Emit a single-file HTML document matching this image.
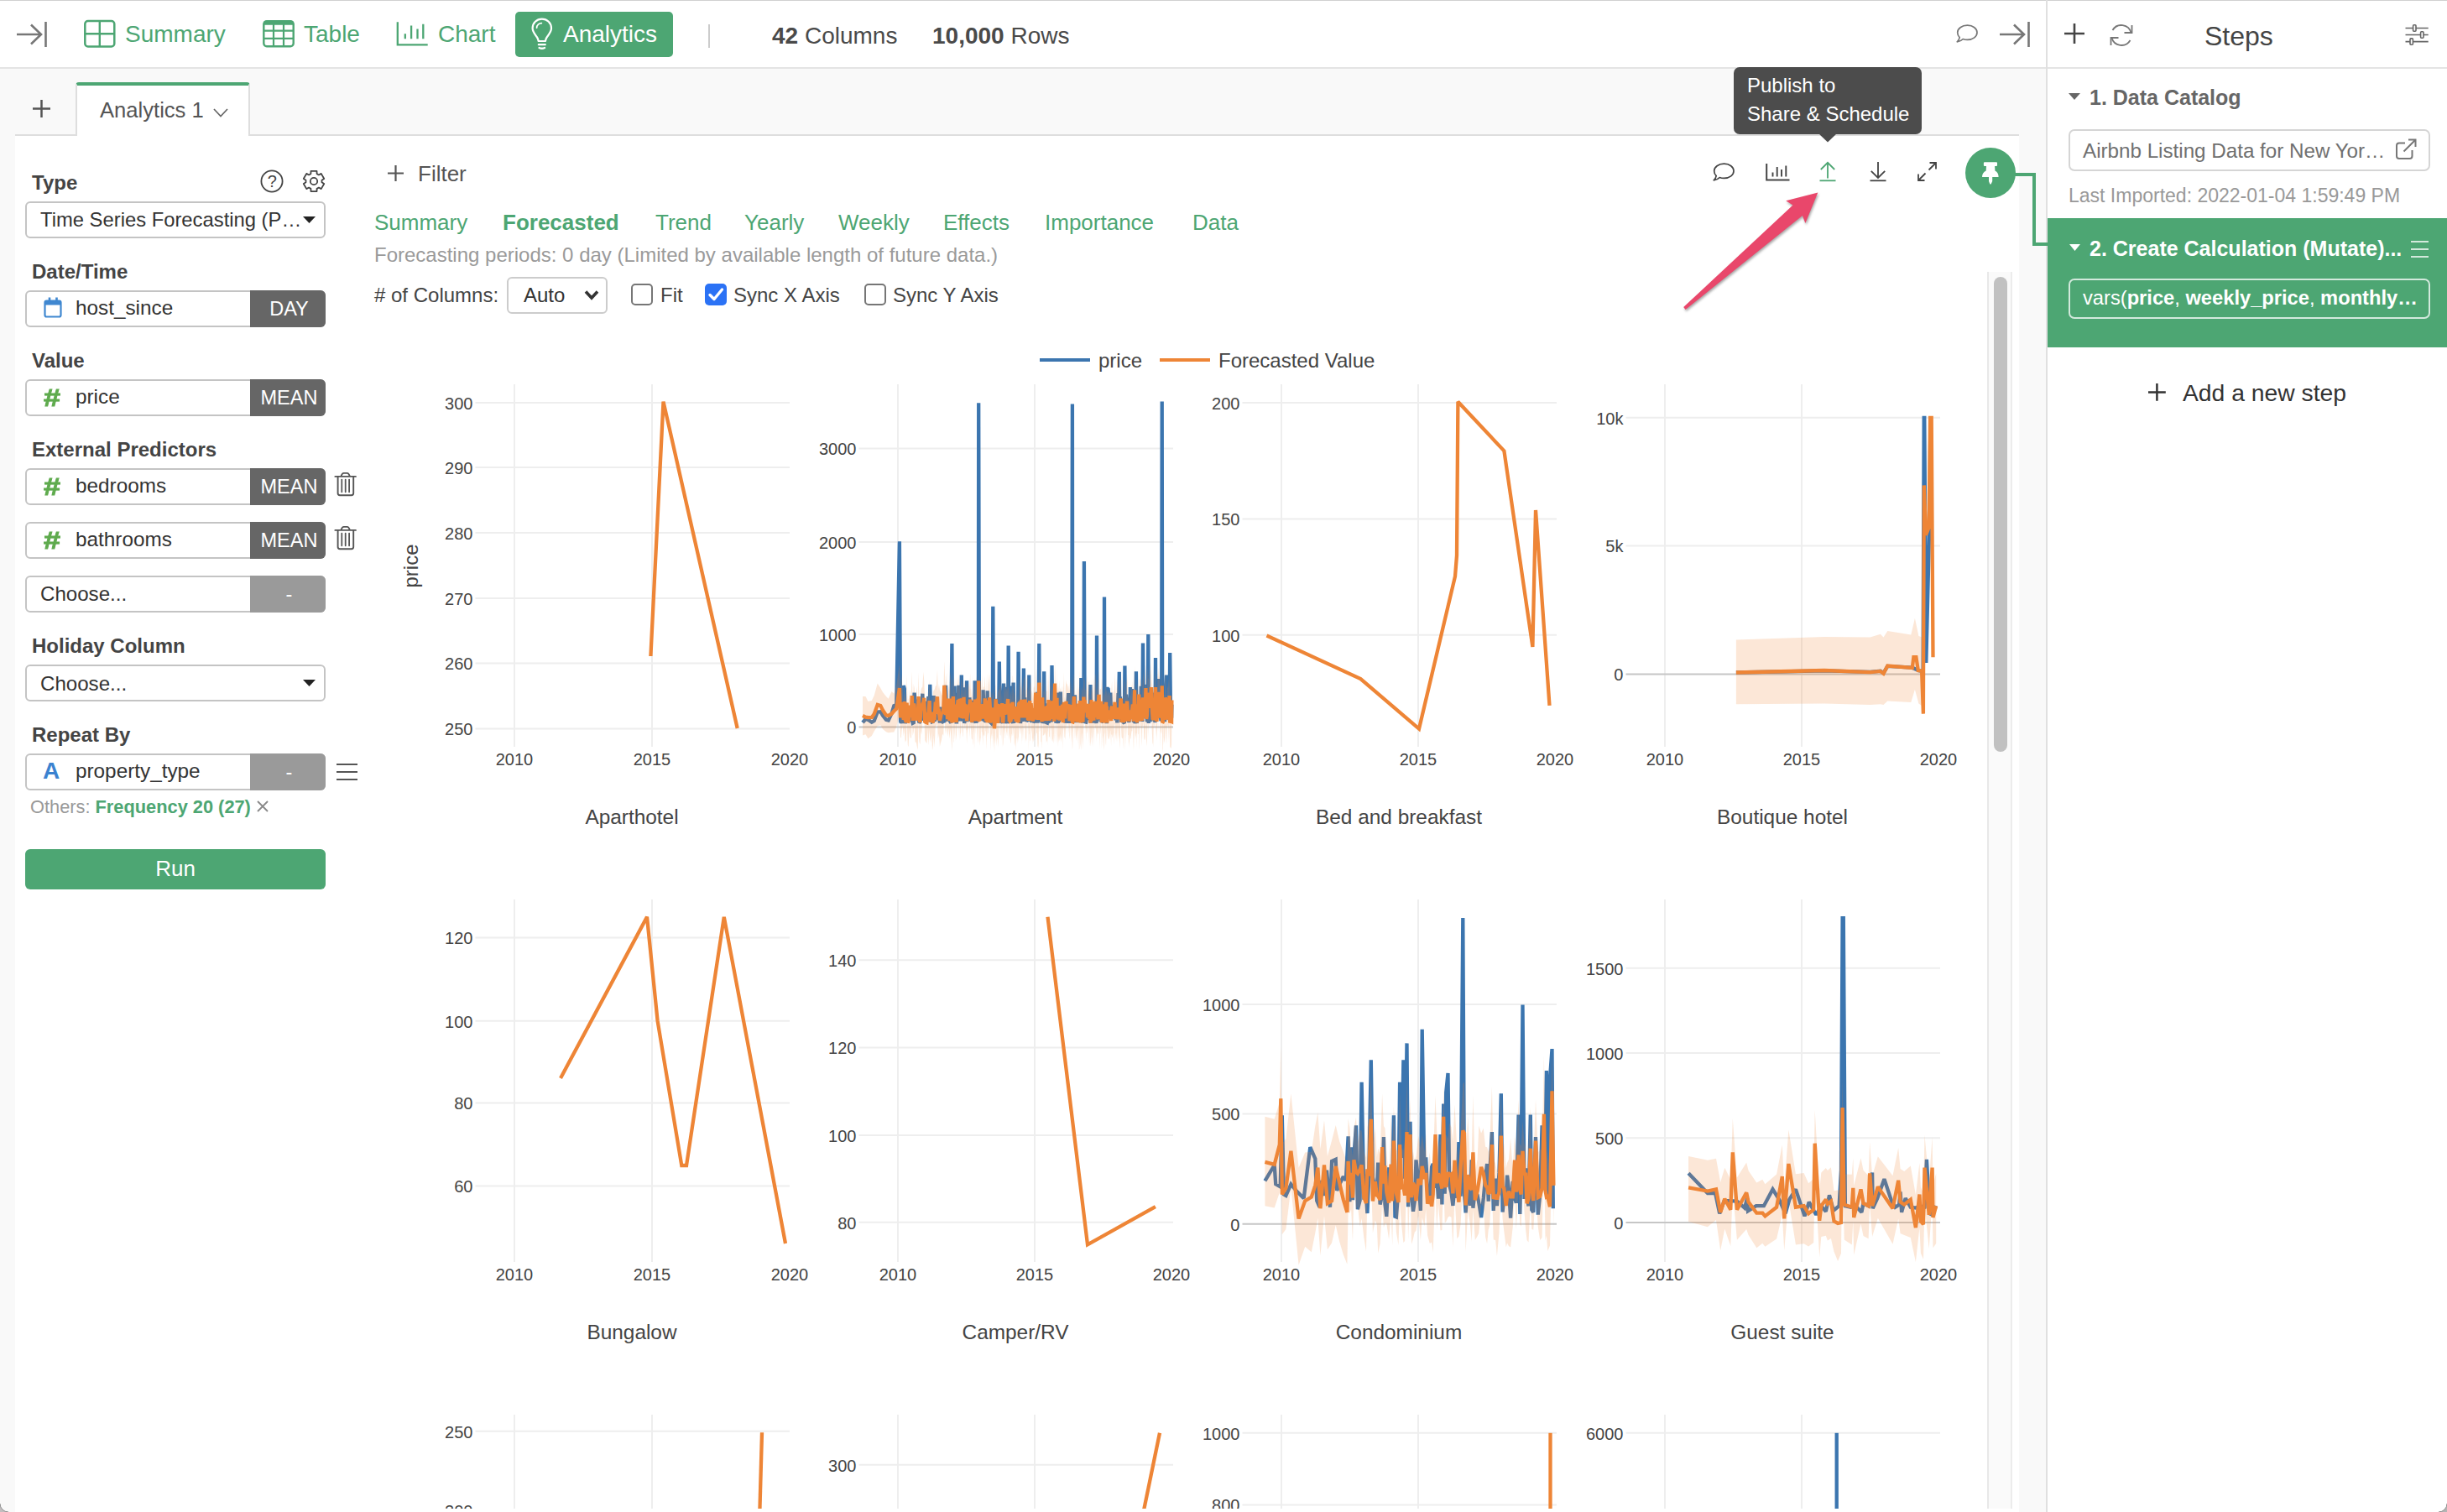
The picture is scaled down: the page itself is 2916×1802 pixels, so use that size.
<!DOCTYPE html>
<html><head><meta charset="utf-8"><title>Analytics</title>
<style>
html,body{margin:0;padding:0;background:#fff;}
body{width:2916px;height:1802px;position:relative;overflow:hidden;font-family:"Liberation Sans",sans-serif;}
.t{position:absolute;white-space:nowrap;}
.b{position:absolute;box-sizing:border-box;}
svg{overflow:visible;}
b{font-weight:700;}
</style></head><body>
<div class="b" style="left:0px;top:0px;width:2916px;height:1802px;background:#f9f9f9;"></div>
<div class="b" style="left:0px;top:0px;width:2440px;height:80px;background:#fff;border-bottom:2px solid #e4e4e4;border-top:1px solid #d0d0d0;box-sizing:content-box;height:79px;"></div>
<div class="b" style="left:18px;top:161px;width:2388px;height:1641px;background:#fff;"></div>
<div class="b" style="left:18px;top:160px;width:2388px;height:2px;background:#dedede;"></div>
<div class="b" style="left:2440px;top:0px;width:476px;height:1802px;background:#fff;"></div>
<div class="b" style="left:2438px;top:0px;width:2px;height:1802px;background:#e0e0e0;"></div>
<div class="b" style="left:2440px;top:0px;width:476px;height:1px;background:#d0d0d0;"></div>
<div class="b" style="left:2440px;top:80px;width:476px;height:2px;background:#e4e4e4;"></div>
<svg class="b" style="left:20px;top:26px" width="37" height="30" viewBox="0 0 37 30"><path d="M0 15 H28 M17 3.5 L29 15 L17 26.5 M34.5 0 V30" fill="none" stroke="#777" stroke-width="2.6"/></svg>
<svg class="b" style="left:100px;top:24px" width="38" height="33" viewBox="0 0 38 33"><rect x="1.3" y="1.1" width="35" height="30.4" rx="3.5" fill="none" stroke="#4da673" stroke-width="2.5"/><path d="M18.8 1.1 V31.5 M1.3 16.3 H36.3" stroke="#4da673" stroke-width="2.4" fill="none"/></svg>
<div class="t " style="left:149px;top:27.0px;font-size:28px;line-height:28px;color:#4da673;font-weight:400;">Summary</div>
<svg class="b" style="left:313px;top:24px" width="38" height="33" viewBox="0 0 38 33"><rect x="1.3" y="1.3" width="35.4" height="30" rx="3.5" fill="none" stroke="#4da673" stroke-width="2.4"/><path d="M1.3 3.6 H36.7" stroke="#4da673" stroke-width="4.2"/><path d="M13 3 V31 M25 3 V31 M1.3 12.6 H36.7 M1.3 21.8 H36.7" stroke="#4da673" stroke-width="2.2" fill="none"/></svg>
<div class="t " style="left:362px;top:27.0px;font-size:28px;line-height:28px;color:#4da673;font-weight:400;">Table</div>
<svg class="b" style="left:472px;top:25px" width="39" height="30" viewBox="0 0 39 30"><path d="M1.8 1.3 V28.3 H37.7" fill="none" stroke="#4da673" stroke-width="2.3"/><path d="M10.8 15.2 V21.3 M18.1 5.4 V21.3 M25.5 9.5 V21.3 M32.3 3.8 V21.3" stroke="#4da673" stroke-width="2.3" fill="none"/></svg>
<div class="t " style="left:522px;top:27.0px;font-size:28px;line-height:28px;color:#4da673;font-weight:400;">Chart</div>
<div class="b" style="left:614px;top:14px;width:188px;height:54px;background:#4da673;border-radius:5px;"></div>
<svg class="b" style="left:632px;top:21px" width="28" height="40" viewBox="0 0 28 40"><path d="M9.6 28 C9.6 22.5 2.6 19.5 2.6 12.6 C2.6 6.3 7.6 1.6 13.8 1.6 C20 1.6 25 6.3 25 12.6 C25 19.5 18 22.5 18 28 Z" fill="none" stroke="#fff" stroke-width="2.2" stroke-linejoin="round"/><path d="M9.8 32.2 H17.8" stroke="#fff" stroke-width="2.2" stroke-linecap="round"/><path d="M10.6 36 Q13.8 37.6 17 36" fill="none" stroke="#fff" stroke-width="2.4" stroke-linecap="round"/><path d="M7.6 12.2 C7.6 9 10.4 6.6 13.4 6.6" fill="none" stroke="#fff" stroke-width="1.7" stroke-linecap="round"/></svg>
<div class="t " style="left:671px;top:27.0px;font-size:28px;line-height:28px;color:#fff;font-weight:400;">Analytics</div>
<div class="b" style="left:844px;top:29px;width:2px;height:28px;background:#ccc;"></div>
<div class="t " style="left:920px;top:29.0px;font-size:28px;line-height:28px;color:#4a4a4a;font-weight:400;"><b>42</b> Columns</div>
<div class="t " style="left:1111px;top:29.0px;font-size:28px;line-height:28px;color:#4a4a4a;font-weight:400;"><b>10,000</b> Rows</div>
<svg class="b" style="left:2331px;top:29px" width="26" height="22.0" viewBox="0 0 26 22"><path d="M13.5 1.2 C20.2 1.2 25 5 25 9.8 C25 14.6 20.2 18.4 13.5 18.4 C11.6 18.4 9.8 18.1 8.2 17.5 C6.3 19.6 3.6 20.6 1.2 20.8 C3 19.3 3.9 17.4 4.2 15.7 C2.6 14.1 1.7 12 1.7 9.8 C1.7 5 6.8 1.2 13.5 1.2 Z" fill="none" stroke="#777" stroke-width="1.7" stroke-linejoin="round"/></svg>
<svg class="b" style="left:2383px;top:26px" width="37" height="30" viewBox="0 0 37 30"><path d="M0 15 H28 M17 3.5 L29 15 L17 26.5 M34.5 0 V30" fill="none" stroke="#777" stroke-width="2.6"/></svg>
<svg class="b" style="left:39px;top:119px" width="21" height="21" viewBox="0 0 21 21"><path d="M10.5 0 V21 M0 10.5 H21" stroke="#555" stroke-width="2.5" fill="none"/></svg>
<div class="b" style="left:90px;top:98px;width:208px;height:64px;background:#fff;border:2px solid #dedede;border-bottom:none;border-top:4px solid #4da673;border-radius:4px 4px 0 0;box-sizing:border-box;"></div>
<div class="t " style="left:119px;top:119.2px;font-size:25.6px;line-height:25.6px;color:#555;font-weight:400;">Analytics 1</div>
<svg class="b" style="left:254px;top:128.5px" width="18" height="11" viewBox="0 0 18 11"><path d="M1 1 L9 9.5 L17 1" fill="none" stroke="#666" stroke-width="1.7"/></svg>
<div class="t " style="left:38px;top:206.0px;font-size:24px;line-height:24px;color:#444;font-weight:700;">Type</div>
<svg class="b" style="left:310px;top:201.9px" width="28" height="28" viewBox="0 0 28 28"><circle cx="14" cy="14" r="12.6" fill="none" stroke="#444" stroke-width="1.8"/><text x="14.2" y="21.2" font-size="20" text-anchor="middle" fill="#444" font-family="Liberation Sans, sans-serif">?</text></svg>
<svg class="b" style="left:360px;top:201.9px" width="28" height="28" viewBox="0 0 28 28"><path d="M10.40 5.10 L10.48 1.90 L17.52 1.90 L17.60 5.10 L19.91 6.43 L22.72 4.91 L26.24 10.99 L23.51 12.67 L23.51 15.33 L26.24 17.01 L22.72 23.09 L19.91 21.57 L17.60 22.90 L17.52 26.10 L10.48 26.10 L10.40 22.90 L8.09 21.57 L5.28 23.09 L1.76 17.01 L4.49 15.33 L4.49 12.67 L1.76 10.99 L5.28 4.91 L8.09 6.43 Z" fill="none" stroke="#444" stroke-width="1.8" stroke-linejoin="round"/><circle cx="14" cy="14" r="4.2" fill="none" stroke="#444" stroke-width="1.8"/></svg>
<div class="b" style="left:30px;top:240px;width:358px;height:44px;background:#fff;border:2px solid #c4c4c4;border-radius:6px;box-sizing:border-box;"></div>
<div class="t " style="left:48px;top:249.6px;font-size:23.8px;line-height:23.8px;color:#333;font-weight:400;">Time Series Forecasting (P…</div>
<svg class="b" style="left:360.5px;top:258px" width="15" height="8" viewBox="0 0 15 8"><path d="M0 0 H15 L7.5 8 Z" fill="#222"/></svg>
<div class="t " style="left:38px;top:312.0px;font-size:24px;line-height:24px;color:#444;font-weight:700;">Date/Time</div>
<div class="b" style="left:30px;top:346px;width:358px;height:44px;background:#fff;border:2px solid #c4c4c4;border-radius:6px;box-sizing:border-box;"></div>
<div class="b" style="left:298px;top:346px;width:90px;height:44px;background:#666;border-radius:0 6px 6px 0;"></div>
<svg class="b" style="left:51px;top:354px" width="24" height="26" viewBox="0 0 24 26"><rect x="2.5" y="4.5" width="19" height="19" rx="2" fill="none" stroke="#3f87d0" stroke-width="2.2"/><path d="M2.5 4.5 H21.5 V9.5 H2.5 Z" fill="#3f87d0"/><path d="M8 0.5 V6 M16.5 0.5 V6" stroke="#3f87d0" stroke-width="2.6"/></svg>
<div class="t " style="left:90px;top:355.4px;font-size:24.3px;line-height:24.3px;color:#333;font-weight:400;">host_since</div>
<div class="t" style="left:300px;width:89px;text-align:center;top:356px;font-size:23.5px;line-height:24px;color:#fff;">DAY</div>
<div class="t " style="left:38px;top:418.0px;font-size:24px;line-height:24px;color:#444;font-weight:700;">Value</div>
<div class="b" style="left:30px;top:452px;width:358px;height:44px;background:#fff;border:2px solid #c4c4c4;border-radius:6px;box-sizing:border-box;"></div>
<div class="b" style="left:298px;top:452px;width:90px;height:44px;background:#666;border-radius:0 6px 6px 0;"></div>
<div class="t " style="left:52px;top:458.5px;font-size:30px;line-height:30px;color:#5fab4e;font-weight:700;transform:scaleX(1.2);transform-origin:0 50%;-webkit-text-stroke:0.9px #5fab4e;">#</div>
<div class="t " style="left:90px;top:461.4px;font-size:24.3px;line-height:24.3px;color:#333;font-weight:400;">price</div>
<div class="t" style="left:300px;width:89px;text-align:center;top:462px;font-size:23.5px;line-height:24px;color:#fff;">MEAN</div>
<div class="t " style="left:38px;top:524.0px;font-size:24px;line-height:24px;color:#444;font-weight:700;">External Predictors</div>
<div class="b" style="left:30px;top:558px;width:358px;height:44px;background:#fff;border:2px solid #c4c4c4;border-radius:6px;box-sizing:border-box;"></div>
<div class="b" style="left:298px;top:558px;width:90px;height:44px;background:#666;border-radius:0 6px 6px 0;"></div>
<div class="t " style="left:52px;top:564.5px;font-size:30px;line-height:30px;color:#5fab4e;font-weight:700;transform:scaleX(1.2);transform-origin:0 50%;-webkit-text-stroke:0.9px #5fab4e;">#</div>
<div class="t " style="left:90px;top:567.4px;font-size:24.3px;line-height:24.3px;color:#333;font-weight:400;">bedrooms</div>
<div class="t" style="left:300px;width:89px;text-align:center;top:568px;font-size:23.5px;line-height:24px;color:#fff;">MEAN</div>
<svg class="b" style="left:399px;top:562px" width="26" height="30" viewBox="0 0 26 30"><path d="M0.4 5.9 H24.9" stroke="#555" stroke-width="1.9" stroke-linecap="round"/><path d="M7.4 5.6 C8.3 3.2 9.3 1.9 10.6 1.9 H14.7 C16 1.9 17 3.2 17.9 5.6" fill="none" stroke="#555" stroke-width="1.8"/><path d="M3.6 6 V25.8 Q3.6 28.2 6 28.2 H19.8 Q22.2 28.2 22.2 25.8 V6" fill="none" stroke="#555" stroke-width="1.9"/><path d="M8.3 9.6 V24.3 M12.7 9.6 V24.3 M17.1 9.6 V24.3" stroke="#555" stroke-width="1.8" stroke-linecap="round"/></svg>
<div class="b" style="left:30px;top:622px;width:358px;height:44px;background:#fff;border:2px solid #c4c4c4;border-radius:6px;box-sizing:border-box;"></div>
<div class="b" style="left:298px;top:622px;width:90px;height:44px;background:#666;border-radius:0 6px 6px 0;"></div>
<div class="t " style="left:52px;top:628.5px;font-size:30px;line-height:30px;color:#5fab4e;font-weight:700;transform:scaleX(1.2);transform-origin:0 50%;-webkit-text-stroke:0.9px #5fab4e;">#</div>
<div class="t " style="left:90px;top:631.4px;font-size:24.3px;line-height:24.3px;color:#333;font-weight:400;">bathrooms</div>
<div class="t" style="left:300px;width:89px;text-align:center;top:632px;font-size:23.5px;line-height:24px;color:#fff;">MEAN</div>
<svg class="b" style="left:399px;top:626px" width="26" height="30" viewBox="0 0 26 30"><path d="M0.4 5.9 H24.9" stroke="#555" stroke-width="1.9" stroke-linecap="round"/><path d="M7.4 5.6 C8.3 3.2 9.3 1.9 10.6 1.9 H14.7 C16 1.9 17 3.2 17.9 5.6" fill="none" stroke="#555" stroke-width="1.8"/><path d="M3.6 6 V25.8 Q3.6 28.2 6 28.2 H19.8 Q22.2 28.2 22.2 25.8 V6" fill="none" stroke="#555" stroke-width="1.9"/><path d="M8.3 9.6 V24.3 M12.7 9.6 V24.3 M17.1 9.6 V24.3" stroke="#555" stroke-width="1.8" stroke-linecap="round"/></svg>
<div class="b" style="left:30px;top:686px;width:358px;height:44px;background:#fff;border:2px solid #c4c4c4;border-radius:6px;box-sizing:border-box;"></div>
<div class="b" style="left:298px;top:686px;width:90px;height:44px;background:#9a9a9a;border-radius:0 6px 6px 0;"></div>
<div class="t " style="left:48px;top:695.5px;font-size:24.1px;line-height:24.1px;color:#333;font-weight:400;">Choose...</div>
<div class="t" style="left:300px;width:89px;text-align:center;top:696px;font-size:23.5px;line-height:24px;color:#fff;">-</div>
<div class="t " style="left:38px;top:758.0px;font-size:24px;line-height:24px;color:#444;font-weight:700;">Holiday Column</div>
<div class="b" style="left:30px;top:792px;width:358px;height:44px;background:#fff;border:2px solid #c4c4c4;border-radius:6px;box-sizing:border-box;"></div>
<div class="t " style="left:48px;top:802.5px;font-size:24.1px;line-height:24.1px;color:#333;font-weight:400;">Choose...</div>
<svg class="b" style="left:360.5px;top:810px" width="15" height="8" viewBox="0 0 15 8"><path d="M0 0 H15 L7.5 8 Z" fill="#222"/></svg>
<div class="t " style="left:38px;top:864.0px;font-size:24px;line-height:24px;color:#444;font-weight:700;">Repeat By</div>
<div class="b" style="left:30px;top:898px;width:358px;height:44px;background:#fff;border:2px solid #c4c4c4;border-radius:6px;box-sizing:border-box;"></div>
<div class="b" style="left:298px;top:898px;width:90px;height:44px;background:#9a9a9a;border-radius:0 6px 6px 0;"></div>
<div class="t " style="left:51px;top:905.0px;font-size:28px;line-height:28px;color:#3b82d0;font-weight:700;font-family:"DejaVu Serif",serif;-webkit-text-stroke:0.6px #3b82d0;">A</div>
<div class="t " style="left:90px;top:907.4px;font-size:24.3px;line-height:24.3px;color:#333;font-weight:400;">property_type</div>
<div class="t" style="left:300px;width:89px;text-align:center;top:908px;font-size:23.5px;line-height:24px;color:#fff;">-</div>
<svg class="b" style="left:401px;top:909px" width="25" height="22" viewBox="0 0 25 22"><path d="M0 2 H25 M0 11 H25 M0 20 H25" stroke="#555" stroke-width="2"/></svg>
<div class="t " style="left:36px;top:951.1px;font-size:21.8px;line-height:21.8px;color:#999;font-weight:400;">Others: <b style="color:#4da673">Frequency 20 (27)</b></div>
<svg class="b" style="left:306px;top:954px" width="14" height="14" viewBox="0 0 14 14"><path d="M1 1 L13 13 M13 1 L1 13" stroke="#888" stroke-width="1.8"/></svg>
<div class="b" style="left:30px;top:1012px;width:358px;height:48px;background:#4da673;border-radius:6px;"></div>
<div class="t" style="left:-391px;width:1200px;text-align:center;top:1022.0px;font-size:26px;line-height:26px;color:#fff;font-weight:400;">Run</div>
<svg class="b" style="left:462px;top:197px" width="19" height="19" viewBox="0 0 19 19"><path d="M9.5 0 V19 M0 9.5 H19" stroke="#555" stroke-width="2.2" fill="none"/></svg>
<div class="t " style="left:498px;top:194.0px;font-size:26px;line-height:26px;color:#555;font-weight:400;">Filter</div>
<div class="t " style="left:446px;top:252.0px;font-size:26px;line-height:26px;color:#4da673;font-weight:400;">Summary</div>
<div class="t " style="left:599px;top:252.0px;font-size:26px;line-height:26px;color:#4da673;font-weight:700;">Forecasted</div>
<div class="t " style="left:781px;top:252.0px;font-size:26px;line-height:26px;color:#4da673;font-weight:400;">Trend</div>
<div class="t " style="left:887px;top:252.0px;font-size:26px;line-height:26px;color:#4da673;font-weight:400;">Yearly</div>
<div class="t " style="left:999px;top:252.0px;font-size:26px;line-height:26px;color:#4da673;font-weight:400;">Weekly</div>
<div class="t " style="left:1124px;top:252.0px;font-size:26px;line-height:26px;color:#4da673;font-weight:400;">Effects</div>
<div class="t " style="left:1245px;top:252.0px;font-size:26px;line-height:26px;color:#4da673;font-weight:400;">Importance</div>
<div class="t " style="left:1421px;top:252.0px;font-size:26px;line-height:26px;color:#4da673;font-weight:400;">Data</div>
<div class="t " style="left:446px;top:292.0px;font-size:24px;line-height:24px;color:#9a9a9a;font-weight:400;">Forecasting periods: 0 day (Limited by available length of future data.)</div>
<div class="t " style="left:446px;top:340.0px;font-size:24px;line-height:24px;color:#444;font-weight:400;"># of Columns:</div>
<div class="b" style="left:604px;top:330px;width:120px;height:44px;background:#fff;border:2px solid #ccc;border-radius:6px;box-sizing:border-box;"></div>
<div class="t " style="left:624px;top:340.0px;font-size:24px;line-height:24px;color:#333;font-weight:400;">Auto</div>
<svg class="b" style="left:696px;top:345px" width="18" height="13" viewBox="0 0 18 13"><path d="M2 2.5 L9 10 L16 2.5" fill="none" stroke="#333" stroke-width="3.6"/></svg>
<div class="b" style="left:752px;top:338px;width:26px;height:26px;background:#fff;border:2px solid #767676;border-radius:5px;box-sizing:border-box;"></div>
<div class="t " style="left:787px;top:340.0px;font-size:24px;line-height:24px;color:#444;font-weight:400;">Fit</div>
<div class="b" style="left:840px;top:338px;width:26px;height:26px;background:#2b72f5;border-radius:5px;"></div>
<svg class="b" style="left:840px;top:338px" width="26" height="26" viewBox="0 0 26 26"><path d="M6 13.5 L11 18.5 L20.5 7" fill="none" stroke="#fff" stroke-width="3.4" stroke-linecap="round" stroke-linejoin="round"/></svg>
<div class="t " style="left:874px;top:340.0px;font-size:24px;line-height:24px;color:#444;font-weight:400;">Sync X Axis</div>
<div class="b" style="left:1030px;top:338px;width:26px;height:26px;background:#fff;border:2px solid #767676;border-radius:5px;box-sizing:border-box;"></div>
<div class="t " style="left:1064px;top:340.0px;font-size:24px;line-height:24px;color:#444;font-weight:400;">Sync Y Axis</div>
<svg class="b" style="left:2041px;top:193.5px" width="26" height="22.0" viewBox="0 0 26 22"><path d="M13.5 1.2 C20.2 1.2 25 5 25 9.8 C25 14.6 20.2 18.4 13.5 18.4 C11.6 18.4 9.8 18.1 8.2 17.5 C6.3 19.6 3.6 20.6 1.2 20.8 C3 19.3 3.9 17.4 4.2 15.7 C2.6 14.1 1.7 12 1.7 9.8 C1.7 5 6.8 1.2 13.5 1.2 Z" fill="none" stroke="#444" stroke-width="1.7" stroke-linejoin="round"/></svg>
<svg class="b" style="left:2104px;top:191px" width="29" height="26" viewBox="0 0 29 26"><path d="M1.2 4 V23.5 H28.5" fill="none" stroke="#444" stroke-width="2"/><path d="M8.5 14.5 V19.5 M13.7 8 V19.5 M19 11 V19.5 M24.3 6.5 V19.5" stroke="#444" stroke-width="1.9" fill="none"/></svg>
<svg class="b" style="left:2166px;top:190px" width="24" height="28" viewBox="0 0 24 28"><path d="M12 4 V22.5 M3.8 12 L12 3.8 L20.2 12" fill="none" stroke="#4da673" stroke-width="1.8"/><path d="M2.5 25.3 H21.5" stroke="#4da673" stroke-width="1.8"/></svg>
<svg class="b" style="left:2226px;top:190px" width="24" height="28" viewBox="0 0 24 28"><path d="M12 3 V21.8 M3.8 13.8 L12 22 L20.2 13.8" fill="none" stroke="#444" stroke-width="1.8"/><path d="M2.5 25.3 H21.5" stroke="#444" stroke-width="1.8"/></svg>
<svg class="b" style="left:2284px;top:192px" width="25" height="25" viewBox="0 0 25 25"><path d="M2 23 L10.5 14.5 M14.5 10.5 L23 2 M15.5 2 H23 V9.5 M2 15.5 V23 H9.5" fill="none" stroke="#444" stroke-width="1.8"/></svg>
<div class="b" style="left:2342px;top:176px;width:60px;height:60px;background:#4da673;border-radius:50%;"></div>
<svg class="b" style="left:2358px;top:190px" width="28" height="32" viewBox="0 0 28 32"><path d="M7 3.3 H21 Q22 3.3 22 4.3 V7.1 Q22 8.1 21 8.1 H19.1 L19.4 13.6 C22.3 15 23.6 17.8 23.6 21 H16.2 V26 L14.6 29.4 H13.4 L12 26 V21 H4 C4 17.8 5.7 15 8.7 13.6 L9 8.1 H7 Q5.9 8.1 5.9 7.1 V4.3 Q5.9 3.3 7 3.3 Z" fill="#fff"/></svg>
<svg class="b" style="left:2398px;top:200px" width="46" height="100"><path d="M3 8 H26 V91 H44" fill="none" stroke="#4da673" stroke-width="4"/></svg>
<div class="b" style="left:2066px;top:80px;width:224px;height:80px;background:#4c4c4c;border-radius:7px;"></div>
<svg class="b" style="left:2167px;top:159px" width="22" height="12"><path d="M0 0 H22 L11 10.6 Z" fill="#4c4c4c"/></svg>
<div class="t " style="left:2082px;top:90.0px;font-size:24px;line-height:24px;color:#fff;font-weight:400;">Publish to</div>
<div class="t " style="left:2082px;top:124.0px;font-size:24px;line-height:24px;color:#fff;font-weight:400;">Share &amp; Schedule</div>
<svg class="b" style="left:2000px;top:225px;filter:drop-shadow(1.5px 2px 1.5px rgba(0,0,0,.35))" width="175" height="150"><path d="M166.3 4.6 L128.2 14.2 L136.5 19.5 L6.2 141.0 L8.6 143.9 L147.9 32.0 L151.4 41.0 Z" fill="#e9476b"/></svg>
<div class="b" style="left:2368px;top:324px;width:30px;height:1474px;background:#fafafa;border-left:2px solid #e8e8e8;border-right:2px solid #ececec;box-sizing:border-box;"></div>
<div class="b" style="left:2376px;top:330px;width:16px;height:566px;background:#c1c1c1;border-radius:8px;"></div>
<svg class="b" style="left:440px;top:380px;overflow:hidden" width="1926" height="1418" viewBox="0 0 1926 1418" font-family="Liberation Sans, sans-serif">
<line x1="799" y1="49" x2="859" y2="49" stroke="#3b75af" stroke-width="4"/>
<text x="869" y="58" font-size="24" fill="#444">price</text>
<line x1="942" y1="49" x2="1002" y2="49" stroke="#ee8536" stroke-width="4"/>
<text x="1012" y="58" font-size="24" fill="#444">Forecasted Value</text>
<text transform="translate(57.5,294.5) rotate(-90)" text-anchor="middle" font-size="24" fill="#444">price</text>
<line x1="173" y1="78" x2="173" y2="510" stroke="#eeeeee" stroke-width="2"/>
<text x="173" y="532" text-anchor="middle" font-size="20" fill="#444">2010</text>
<line x1="337" y1="78" x2="337" y2="510" stroke="#eeeeee" stroke-width="2"/>
<text x="337" y="532" text-anchor="middle" font-size="20" fill="#444">2015</text>
<text x="501" y="532" text-anchor="middle" font-size="20" fill="#444">2020</text>
<line x1="126.5" y1="100" x2="501" y2="100" stroke="#eeeeee" stroke-width="2"/>
<text x="123.4" y="107.8" text-anchor="end" font-size="20" fill="#444">300</text>
<line x1="126.5" y1="177" x2="501" y2="177" stroke="#eeeeee" stroke-width="2"/>
<text x="123.4" y="184.8" text-anchor="end" font-size="20" fill="#444">290</text>
<line x1="126.5" y1="255" x2="501" y2="255" stroke="#eeeeee" stroke-width="2"/>
<text x="123.4" y="262.8" text-anchor="end" font-size="20" fill="#444">280</text>
<line x1="126.5" y1="333" x2="501" y2="333" stroke="#eeeeee" stroke-width="2"/>
<text x="123.4" y="340.8" text-anchor="end" font-size="20" fill="#444">270</text>
<line x1="126.5" y1="410.6" x2="501" y2="410.6" stroke="#eeeeee" stroke-width="2"/>
<text x="123.4" y="418.4" text-anchor="end" font-size="20" fill="#444">260</text>
<line x1="126.5" y1="488.5" x2="501" y2="488.5" stroke="#eeeeee" stroke-width="2"/>
<text x="123.4" y="496.3" text-anchor="end" font-size="20" fill="#444">250</text>
<text x="313" y="602" text-anchor="middle" font-size="24.4" fill="#444">Aparthotel</text>
<polyline points="335.4,402 350.5,98.7 438.7,488" fill="none" stroke="#ee8536" stroke-width="4.3" stroke-linejoin="miter" stroke-miterlimit="2"/>
<line x1="630" y1="78" x2="630" y2="510" stroke="#eeeeee" stroke-width="2"/>
<text x="630" y="532" text-anchor="middle" font-size="20" fill="#444">2010</text>
<line x1="793" y1="78" x2="793" y2="510" stroke="#eeeeee" stroke-width="2"/>
<text x="793" y="532" text-anchor="middle" font-size="20" fill="#444">2015</text>
<text x="956" y="532" text-anchor="middle" font-size="20" fill="#444">2020</text>
<line x1="583.5" y1="154.5" x2="958" y2="154.5" stroke="#eeeeee" stroke-width="2"/>
<text x="580.4" y="162.3" text-anchor="end" font-size="20" fill="#444">3000</text>
<line x1="583.5" y1="266" x2="958" y2="266" stroke="#eeeeee" stroke-width="2"/>
<text x="580.4" y="273.8" text-anchor="end" font-size="20" fill="#444">2000</text>
<line x1="583.5" y1="376" x2="958" y2="376" stroke="#eeeeee" stroke-width="2"/>
<text x="580.4" y="383.8" text-anchor="end" font-size="20" fill="#444">1000</text>
<line x1="583.5" y1="486.6" x2="958" y2="486.6" stroke="#c6c6c6" stroke-width="2"/>
<text x="580.4" y="494.4" text-anchor="end" font-size="20" fill="#444">0</text>
<text x="770" y="602" text-anchor="middle" font-size="24.4" fill="#444">Apartment</text>
<polyline points="588,481.1 591.5,477 594.5,477.8 598.8,480.8 601.7,479 605.7,468.6 609.3,468.2 612,472.8 616,477.9 618.7,478.5 622.5,470.5 625.3,461.1 628.2,460.1 631.9,265.2 633.1,479.5 633.8,481.4 634.5,478.8 635.6,481.9 636.8,437.1 637.8,440.7 638.7,482.2 640,475.5 640.6,471.5 641.8,473.5 642.6,469.1 643.3,467.4 644,479.6 644.8,465.1 646,476.5 646.7,477.8 647.7,481.8 648.8,481.2 649.6,445.6 650.6,455.8 651.3,463.3 651.9,471 652.6,453.7 653.7,476.5 654.6,478 655.4,481.2 656.4,480.1 657.4,467.8 658.2,464.9 659.3,446.7 660.4,478.8 661.2,474.7 662.2,471.5 663.2,455.9 664.4,479.7 665.5,476.8 666.3,450.1 667.6,469.4 668.3,435.7 669.2,480.8 670.3,463.7 671,480.1 672,479.7 672.6,449 673.6,479.3 674.8,476.9 675.8,472.9 677,474 677.8,475 678.9,474 679.9,481.5 680.9,462.6 681.9,479.3 683.1,480.4 684.3,479.6 685.3,480.8 686.3,455.9 687,436.8 688.1,473.7 689.1,479.3 690.4,469.9 691.6,478 692.4,480.3 693.3,481.5 694.4,387 695,480.9 695.9,470.2 696.3,474.6 696.7,479.2 697,478.6 697.6,437.5 698,477.6 698.4,468.5 698.9,445.9 699.6,480.4 700,480.4 700.5,446.2 701,479.5 701.7,470.5 702.3,436.8 703,474.7 703.4,468 703.9,479.5 704.4,442.5 705.1,468.2 705.8,424.6 706.2,479.5 706.6,473.4 707,475.2 707.4,470.3 707.9,459.5 708.5,439.2 708.9,478 709.2,481.8 709.7,478.7 710.2,475.8 710.8,479.8 711.5,467.7 712.1,431.2 712.6,480.1 713.2,474.7 713.8,468.8 714.1,476.6 714.8,479.2 715.4,451.4 716.1,477.1 716.7,464.6 717.2,479.8 717.7,470.8 718.1,454.7 718.7,481.3 719,477.7 719.4,455.2 719.8,471 720.2,469.6 720.6,460.8 721,469.1 721.3,473.9 721.7,431.2 722.1,475.5 722.5,478.5 722.9,478.2 723.5,481.6 724.1,474.1 724.5,479.4 724.9,478.7 725.4,478 725.9,461.9 726.2,100.3 726.9,455.9 727.6,474.7 728.1,468.4 728.6,475.6 729,476.4 729.4,472.2 729.8,463.4 730.3,470.9 730.9,471.5 731.3,479.1 731.6,442.3 732.4,463.6 732.9,479.6 733.3,451.9 733.8,479.1 734.2,479.4 734.7,480.3 735.4,477.8 736.1,474.4 736.7,443.4 737.1,476.8 737.6,467.9 738,460.1 738.6,472.8 739.1,481.5 739.8,469.9 740.2,480.4 740.6,481.2 741.3,481.9 742,479.3 742.7,480.2 743.3,342.7 744,480.7 744.6,474.8 745,477.3 745.5,476.1 746,481.2 746.3,470.7 746.7,481.5 747.1,465.4 747.6,466.5 748.2,452.8 748.9,466.9 749.4,479.8 750.1,478.6 750.8,408.6 751.5,457.1 751.9,451.9 752.4,481.6 752.8,462.6 753.2,470.5 753.6,475.8 754.2,478.6 754.9,482 755.5,445.8 756,434.6 756.6,471.2 757.3,474.6 757.6,482 758.2,479.3 758.9,476.5 759.5,477.4 760.1,438.9 760.7,482.1 761.1,478.4 761.7,389.6 762.2,473.2 762.8,450.8 763.5,455.9 764,468.7 764.5,481 765.2,475.4 765.8,437.6 766.2,468.8 766.6,479.8 767,482 767.6,433.5 768.3,480.4 768.7,480 769.3,472.1 770,472 770.6,475.4 771.1,462.5 771.6,467.4 772,476.6 772.4,476.2 773.1,477.3 773.6,396.7 774.2,467.3 774.9,462.1 775.4,473.9 776,481.8 776.7,477.7 777.1,467.4 777.5,456.1 778,461.3 778.4,479.8 779,475.6 779.4,460.9 779.9,416.5 780.3,478.9 781,458.2 781.4,451.2 781.9,479.5 782.5,463.1 783.2,480 783.7,479 784.4,467.9 784.9,469.4 785.4,474.4 785.9,477.6 786.3,424.6 786.8,479.7 787.2,468.2 787.5,479.8 788.2,477.6 788.6,478.8 789.1,479.3 789.7,480.1 790.2,476.8 790.7,473.8 791.2,478.1 791.8,475.7 792.4,481.5 792.8,478 793.3,480.3 793.7,480.8 794.2,469.3 794.8,471.9 795.3,465.7 795.9,444.7 796.5,481.7 797.2,464.6 797.7,463.2 798.3,387 798.8,469.1 799.3,474.4 799.9,471.9 800.4,480.3 801,471.5 801.5,481.3 802.2,467.1 802.8,481.9 803.5,479.3 804.2,420.2 804.6,463.9 805.1,470.5 805.8,464.4 806.5,458.4 806.9,467.4 807.3,481.2 807.8,481.4 808.1,479 808.5,479.6 808.9,479.7 809.5,481.9 810.1,471.1 810.8,469.8 811.2,480.4 811.8,477.7 812.4,470.1 812.8,480.5 813.5,413.1 814.2,477.1 814.6,473.4 815.3,463.4 815.8,453.7 816.3,479.2 817,475.1 817.7,478.6 818,477.7 818.5,481.6 819.1,477.7 819.5,468.8 819.9,479.1 820.4,467 821,482.1 821.3,445.5 821.9,479.9 822.4,478.6 822.7,458.1 823.2,476 823.8,444.5 824.3,468.4 824.6,459.8 825.4,477.1 826,462.6 826.7,466.6 827.1,479 827.5,476.6 827.9,469.5 828.5,475.2 828.9,469.6 829.3,481.5 829.8,473.5 830.5,481.7 831.1,478.7 831.6,476.7 831.9,465.7 832.6,456.5 833.2,446.1 833.8,481.2 834.2,479.6 834.5,481.6 835.1,478.6 835.6,477.9 836,473.2 836.7,475.1 837.2,477.6 837.9,101.4 838.2,481.3 838.9,469.1 839.3,481 839.9,471.4 840.4,472 840.9,448.3 841.4,473 842.1,477.1 842.6,466 842.9,481.1 843.5,472.1 843.9,475.2 844.3,475.1 844.7,481 845,477 845.4,480.9 845.9,473.3 846.3,467.1 846.9,472.4 847.4,470.8 847.9,464.4 848.3,427.9 848.8,476 849.1,465.1 849.5,474.6 849.9,481.6 850.5,469.2 851,463.3 851.4,468.1 851.9,289 852.6,469.5 853,469.9 853.7,482 854.2,481.2 854.7,476.1 855.3,475.2 855.8,477.9 856.4,459.8 857,467.3 857.7,470.8 858.1,462.9 858.8,468.8 859.4,436 860,481.6 860.5,471.5 860.9,473.1 861.3,480.4 861.7,466 862,479.6 862.6,474.7 863.1,477.8 863.4,476.4 863.8,481.7 864.5,457.9 865.1,463.6 865.7,460.9 866.2,473.6 866.6,482.1 867,377.4 867.5,479.8 867.9,471.2 868.4,477.9 868.9,461 869.6,471.8 870.3,477.3 870.8,472.2 871.3,470.6 872,457.4 872.4,480.5 872.9,480.1 873.2,464.9 873.7,467.4 874.2,472.7 874.7,473.3 875.1,457.1 875.7,478.8 876,331.6 876.4,479.4 876.8,456.6 877.3,479.5 877.6,475.4 878,459.2 878.4,474.8 878.8,482.1 879.4,438.7 879.9,472.7 880.5,440.1 881.1,445.7 881.7,470.9 882.4,469.3 882.9,466.7 883.3,445.6 884.1,474.3 884.4,471.6 885.1,466 885.6,471.2 886,460.4 886.6,470.8 887.3,476.1 887.9,473.3 888.5,475.1 889.2,464.8 889.5,478.4 890.1,473.6 890.6,471.8 891.3,481.3 891.9,465.1 892.6,446.2 893.1,459.7 893.8,420.7 894.4,476.6 895,450.2 895.4,473.6 895.8,463.4 896.1,481 896.6,467.7 897,479.7 897.6,466.3 898.2,481.5 898.8,475 899.3,481.4 899.9,481.9 900.4,413.5 900.8,468.2 901.4,460.9 902,447.7 902.6,454.7 903.1,477.7 903.7,461.1 904,479 904.7,465.9 905.1,479.2 905.4,480.9 905.9,460.2 906.5,468.9 906.9,439 907.5,468.1 908.2,457.1 908.8,441 909.2,469.5 909.8,457.1 910.4,468 911,480.7 911.6,479.6 912.1,465.3 912.5,482.1 912.9,479 913.3,477.7 913.9,420.2 914.4,477 914.9,482 915.3,463.2 915.6,450.7 916,467.2 916.6,479.7 917.2,465 917.8,477.9 918.3,457.8 918.8,474.7 919.3,469.3 919.8,437.7 920.2,448.6 920.9,466 921.3,479.9 922,386.6 922.7,475.1 923,445.8 923.5,453.4 924.2,435.7 924.9,469.6 925.4,446.9 925.8,476.3 926.2,453.9 926.9,478.8 927.4,479.5 927.9,454 928.3,375.9 928.8,481.9 929.5,474.6 929.9,474.3 930.6,480.2 931.1,453.6 931.8,478.2 932.4,445.5 932.8,477.5 933.5,476.7 934,458.6 934.3,467.7 934.7,475.8 935.2,464.9 935.7,479.9 936.1,471.7 936.5,481.1 937,404 937.4,477.9 938.1,474.6 938.4,473.9 939.1,475.7 939.7,464.3 940.1,469.9 940.8,471.8 941.4,429 942.1,456 942.5,471.2 943,473.2 943.5,479.4 944.2,459.7 944.7,98.6 945.2,465.6 945.7,480 946.2,475.5 946.5,479.9 946.9,464.4 947.5,472.2 948,480.2 948.7,468 949.1,471.1 949.5,435.7 950,424.6 950.5,466.5 950.9,472.7 951.6,476.8 952.3,439.3 953,459 953.5,478.1 954.2,398 954.9,457.9 955.5,470.1 956.1,475.7 956.4,459.7" fill="none" stroke="#3b75af" stroke-width="4.3" stroke-linejoin="miter" stroke-miterlimit="2"/><polygon points="588,450 591.5,450 594.5,456 598.8,455 601.7,449 605.7,434.5 609.3,440 612,444.9 616,450.1 618.7,452.7 622.5,443.9 625.3,446.8 628.2,437 631.9,411.3 633.1,451.2 633.8,433.7 634.5,423.6 635.6,440.3 636.8,456.8 637.8,437.7 638.7,448.4 640,456.6 640.6,424.2 641.8,464.4 642.6,453.3 643.3,452.1 644,442 644.8,454.9 646,443.4 646.7,420.2 647.7,460.1 648.8,435.1 649.6,440.1 650.6,454.6 651.3,446.7 651.9,445.5 652.6,437.8 653.7,461.7 654.6,421.3 655.4,450 656.4,462.3 657.4,442.6 658.2,440.1 659.3,438.5 660.4,420.7 661.2,430.5 662.2,454.7 663.2,463.5 664.4,448.4 665.5,451.5 666.3,450.4 667.6,430.2 668.3,454.9 669.2,460.6 670.3,448.5 671,458.5 672,444.7 672.6,442.8 673.6,441.9 674.8,437.6 675.8,437.3 677,418.5 677.8,444 678.9,435.3 679.9,442.4 680.9,444.3 681.9,447.4 683.1,449.2 684.3,444.5 685.3,408 686.3,431 687,436.5 688.1,421.4 689.1,457.9 690.4,435.7 691.6,443.7 692.4,419.9 693.3,429.4 694.4,461.5 695,439 695.9,421.3 696.3,447.5 696.7,434.2 697,426.7 697.6,447.6 698,427.6 698.4,443 698.9,450 699.6,450.3 700,442.9 700.5,425.9 701,441.9 701.7,431.3 702.3,423.8 703,442.9 703.4,432.8 703.9,439.5 704.4,452.5 705.1,446.2 705.8,417.9 706.2,447.1 706.6,430.1 707,432.6 707.4,436.8 707.9,453.3 708.5,431.2 708.9,447.1 709.2,443.6 709.7,431.4 710.2,432.7 710.8,443.4 711.5,433.4 712.1,461.9 712.6,447.9 713.2,433.6 713.8,438.2 714.1,440.1 714.8,433.7 715.4,442.3 716.1,422 716.7,440.6 717.2,441.4 717.7,449.2 718.1,450.9 718.7,445.2 719,422.7 719.4,449.9 719.8,451.6 720.2,438.6 720.6,431.6 721,448.8 721.3,457.1 721.7,428.9 722.1,428.9 722.5,436.5 722.9,433.8 723.5,426.3 724.1,434.4 724.5,444.4 724.9,424.8 725.4,452.8 725.9,461.7 726.2,402.5 726.9,457.6 727.6,453.6 728.1,438.4 728.6,445 729,442 729.4,431.5 729.8,447.2 730.3,423.1 730.9,444.3 731.3,448.4 731.6,439.7 732.4,437.8 732.9,439.6 733.3,432.7 733.8,425.7 734.2,439.6 734.7,447.7 735.4,443.3 736.1,422.6 736.7,464.2 737.1,429.3 737.6,447.1 738,420.3 738.6,436.4 739.1,422.9 739.8,442.3 740.2,461.8 740.6,443.9 741.3,445.5 742,454.6 742.7,444.5 743.3,450.2 744,439.6 744.6,453.1 745,459.5 745.5,449.5 746,457.9 746.3,437.8 746.7,434.8 747.1,447.7 747.6,460 748.2,456.9 748.9,445.6 749.4,444.8 750.1,442.1 750.8,441.4 751.5,434 751.9,442.4 752.4,429.4 752.8,438.1 753.2,437.4 753.6,457.2 754.2,439.5 754.9,462.3 755.5,454.3 756,434.2 756.6,431.6 757.3,447.7 757.6,443.3 758.2,433.6 758.9,440 759.5,441 760.1,444.5 760.7,437.8 761.1,422 761.7,439.4 762.2,439.4 762.8,463 763.5,436.9 764,449 764.5,442.9 765.2,454.4 765.8,435.2 766.2,450.4 766.6,425.8 767,425.6 767.6,436.1 768.3,447 768.7,446.1 769.3,456.3 770,434.1 770.6,456.9 771.1,455.8 771.6,461 772,434.9 772.4,456.4 773.1,448.9 773.6,460.9 774.2,437 774.9,430.9 775.4,425.2 776,442 776.7,437 777.1,429.1 777.5,451.5 778,432.4 778.4,450.4 779,435.8 779.4,439.3 779.9,430.4 780.3,423.5 781,430.1 781.4,426.7 781.9,458.1 782.5,441.7 783.2,442.3 783.7,430.6 784.4,425.7 784.9,447.9 785.4,438.4 785.9,453.1 786.3,444.2 786.8,434.6 787.2,421.8 787.5,439.2 788.2,433.7 788.6,433.6 789.1,446 789.7,442.1 790.2,455 790.7,444.6 791.2,450.1 791.8,439 792.4,437.9 792.8,440.6 793.3,449.8 793.7,429.5 794.2,416.9 794.8,439.7 795.3,449.2 795.9,451.4 796.5,449.6 797.2,453.7 797.7,439.7 798.3,404.7 798.8,434.4 799.3,428.1 799.9,437.9 800.4,446.4 801,440.7 801.5,459.2 802.2,423.2 802.8,453.3 803.5,442.7 804.2,445 804.6,435.8 805.1,431.9 805.8,455.9 806.5,450.1 806.9,442.5 807.3,443.7 807.8,443.4 808.1,427.2 808.5,450.6 808.9,452.3 809.5,421.6 810.1,457.4 810.8,460.2 811.2,437.4 811.8,437.8 812.4,428.9 812.8,437.3 813.5,446.6 814.2,438.5 814.6,447.2 815.3,456.6 815.8,430 816.3,456.6 817,405.8 817.7,430.4 818,441.2 818.5,431.1 819.1,445.4 819.5,415.6 819.9,448.6 820.4,432.8 821,450.6 821.3,443.5 821.9,436.8 822.4,430.6 822.7,454.4 823.2,439.5 823.8,442.1 824.3,453 824.6,438.7 825.4,446.6 826,436.2 826.7,454 827.1,429.6 827.5,443.5 827.9,420.3 828.5,453.5 828.9,450.2 829.3,454.6 829.8,438.5 830.5,430.6 831.1,435.7 831.6,434.6 831.9,435.9 832.6,438.8 833.2,444.5 833.8,435.7 834.2,442.1 834.5,443 835.1,430.8 835.6,440.7 836,425.1 836.7,452.1 837.2,433.4 837.9,462.6 838.2,453.8 838.9,452.1 839.3,431.1 839.9,421.3 840.4,439.4 840.9,450.6 841.4,442.8 842.1,457.7 842.6,439.6 842.9,451.5 843.5,448.5 843.9,433.7 844.3,463.5 844.7,427.4 845,447.2 845.4,438.7 845.9,442.7 846.3,453.6 846.9,418.6 847.4,456.3 847.9,463.7 848.3,462.3 848.8,441.8 849.1,438.5 849.5,443.5 849.9,437.4 850.5,449.2 851,438.2 851.4,419.1 851.9,430.4 852.6,429.9 853,441.4 853.7,442.1 854.2,449 854.7,432.7 855.3,424.6 855.8,450.9 856.4,439.5 857,432.6 857.7,432.8 858.1,459.2 858.8,430.1 859.4,453.3 860,453.8 860.5,427.5 860.9,446.9 861.3,445.1 861.7,440 862,444.9 862.6,428.3 863.1,440.2 863.4,457 863.8,426.8 864.5,441 865.1,422.8 865.7,425.3 866.2,440.1 866.6,449.4 867,442.2 867.5,439.5 867.9,429.3 868.4,447 868.9,430.8 869.6,419.1 870.3,455.3 870.8,441.5 871.3,441.1 872,441.4 872.4,427 872.9,448.7 873.2,441.2 873.7,427.8 874.2,460.1 874.7,442.1 875.1,447.5 875.7,448.3 876,443.1 876.4,453 876.8,437.3 877.3,439.5 877.6,447 878,427.4 878.4,442.5 878.8,444.3 879.4,449.3 879.9,437.5 880.5,449.4 881.1,442 881.7,445.6 882.4,445.5 882.9,450.3 883.3,445.2 884.1,460.3 884.4,443.2 885.1,431.6 885.6,447.9 886,442.8 886.6,451.4 887.3,440.7 887.9,445.9 888.5,421.6 889.2,446.1 889.5,450.1 890.1,427.6 890.6,446.2 891.3,433 891.9,447.8 892.6,430.4 893.1,458.7 893.8,446.2 894.4,455.6 895,446.9 895.4,418.6 895.8,430.8 896.1,445.3 896.6,455.7 897,460.4 897.6,457.6 898.2,441.5 898.8,458.9 899.3,435.9 899.9,428.9 900.4,433.5 900.8,456 901.4,449.2 902,429.1 902.6,442.3 903.1,423.7 903.7,435.2 904,453.5 904.7,446.6 905.1,458.6 905.4,454.6 905.9,450.4 906.5,432.1 906.9,446.3 907.5,451.2 908.2,439.1 908.8,435.8 909.2,446.2 909.8,431.4 910.4,443 911,448.9 911.6,432.6 912.1,413.5 912.5,435.4 912.9,444.7 913.3,456.3 913.9,443.6 914.4,447.2 914.9,460.7 915.3,436 915.6,434.4 916,438.4 916.6,454.8 917.2,423.1 917.8,459.7 918.3,430.6 918.8,428.2 919.3,435.9 919.8,430.5 920.2,455 920.9,447.6 921.3,437.4 922,427.8 922.7,420 923,427.3 923.5,453.7 924.2,438.1 924.9,435.6 925.4,411.3 925.8,428.3 926.2,445.3 926.9,441.7 927.4,423.9 927.9,413.4 928.3,429.5 928.8,428.2 929.5,413.2 929.9,444 930.6,432.5 931.1,422.5 931.8,410.2 932.4,439.7 932.8,429.8 933.5,447.5 934,441.4 934.3,449.1 934.7,436.5 935.2,435.3 935.7,442.8 936.1,423.5 936.5,432.3 937,410.2 937.4,451.8 938.1,430.3 938.4,455.3 939.1,444.3 939.7,422.2 940.1,426.8 940.8,415.2 941.4,427 942.1,426.1 942.5,451.6 943,447.5 943.5,439.7 944.2,442.8 944.7,408.6 945.2,458.2 945.7,457.1 946.2,420.6 946.5,445.1 946.9,446.7 947.5,448.9 948,444.6 948.7,416 949.1,420.4 949.5,445.6 950,455.9 950.5,449.1 950.9,439.5 951.6,439.4 952.3,429.1 953,439.2 953.5,419.7 954.2,460.5 954.9,450.1 955.5,453.7 956.1,450.9 956.4,436.7 956.4,478.7 956.1,507.3 955.5,512 954.9,511.2 954.2,510 953.5,473.1 953,505.3 952.3,486.6 951.6,485.6 950.9,483.3 950.5,496.7 950,507.2 949.5,496.9 949.1,485.7 948.7,486.7 948,501.8 947.5,505.8 946.9,498.6 946.5,508.7 946.2,471.3 945.7,517 945.2,511.8 944.7,466.1 944.2,494.4 943.5,492.8 943,489.7 942.5,510.2 942.1,466.7 941.4,477.4 940.8,467.1 940.1,492.7 939.7,470.8 939.1,489.3 938.4,503.6 938.1,483.2 937.4,498.7 937,467.8 936.5,473.2 936.1,484.4 935.7,487.4 935.2,483.9 934.7,483.3 934.3,510.9 934,505.8 933.5,506.9 932.8,492.5 932.4,482.9 931.8,467.8 931.1,479.3 930.6,482 929.9,487.5 929.5,479 928.8,480.4 928.3,498.4 927.9,477.8 927.4,485.3 926.9,502.5 926.2,509.8 925.8,488.1 925.4,468.9 924.9,498.9 924.2,501.9 923.5,501.3 923,491.1 922.7,480.6 922,486 921.3,484.5 920.9,509.7 920.2,495.6 919.8,484.8 919.3,485.4 918.8,476.1 918.3,494.8 917.8,514.5 917.2,474.6 916.6,495.6 916,494.9 915.6,486.6 915.3,478.2 914.9,511.8 914.4,494.7 913.9,493.4 913.3,500.1 912.9,495 912.5,502.2 912.1,471.1 911.6,488.1 911,515.4 910.4,499.6 909.8,483.2 909.2,491.8 908.8,490.8 908.2,493.6 907.5,500.1 906.9,501 906.5,494.6 905.9,504.1 905.4,506.7 905.1,511.1 904.7,496.2 904,495.8 903.7,485.3 903.1,477 902.6,499.1 902,479.9 901.4,496.2 900.8,514.4 900.4,492.8 899.9,478.1 899.3,492.4 898.8,513.4 898.2,498.5 897.6,500.6 897,499.5 896.6,498.6 896.1,490 895.8,469.4 895.4,471 895,492.4 894.4,512.7 893.8,500.9 893.1,495.2 892.6,484.7 891.9,504.2 891.3,485.4 890.6,504.6 890.1,492.9 889.5,496.8 889.2,502.2 888.5,483.7 887.9,482.8 887.3,507.4 886.6,493.2 886,498.5 885.6,499.5 885.1,495.3 884.4,495.8 884.1,509.6 883.3,490.5 882.9,492.4 882.4,497 881.7,500.2 881.1,501.6 880.5,499.2 879.9,487.8 879.4,498.8 878.8,480.1 878.4,509.4 878,487.3 877.6,505.9 877.3,509 876.8,492.9 876.4,496.4 876,479.2 875.7,514.5 875.1,508.2 874.7,499.7 874.2,497.6 873.7,486.6 873.2,507.2 872.9,512.5 872.4,474.7 872,485.5 871.3,495.8 870.8,484.4 870.3,513.5 869.6,476.6 868.9,493.5 868.4,495.6 867.9,492.6 867.5,500.7 867,483.6 866.6,504.9 866.2,493.1 865.7,486.5 865.1,488.5 864.5,482.5 863.8,497.2 863.4,510.7 863.1,483.1 862.6,489.7 862,500.2 861.7,498.2 861.3,510 860.9,502.8 860.5,490 860,503.7 859.4,509.7 858.8,484.5 858.1,510.1 857.7,498.4 857,480.6 856.4,481.8 855.8,492.1 855.3,494.5 854.7,486 854.2,503.7 853.7,489.1 853,484.5 852.6,472.9 851.9,482.3 851.4,484.2 851,496.5 850.5,513.8 849.9,493.1 849.5,495.3 849.1,507.3 848.8,494.2 848.3,514.5 847.9,510.1 847.4,506 846.9,480.1 846.3,512.3 845.9,513.7 845.4,484.5 845,491.7 844.7,489.7 844.3,507.6 843.9,497.5 843.5,489.4 842.9,502.2 842.6,495.5 842.1,503.6 841.4,484.8 840.9,501 840.4,487.8 839.9,478.9 839.3,487.2 838.9,491.4 838.2,510.4 837.9,514 837.2,486.9 836.7,504.7 836,483.7 835.6,478.9 835.1,495.2 834.5,501.4 834.2,486.2 833.8,494.4 833.2,484.4 832.6,480.6 831.9,486.8 831.6,495.7 831.1,481.8 830.5,484.5 829.8,491.4 829.3,501.8 828.9,498.7 828.5,499.1 827.9,487.3 827.5,491.4 827.1,480.9 826.7,514 826,488.1 825.4,497.2 824.6,505 824.3,501.1 823.8,494.4 823.2,501 822.7,503 822.4,497.1 821.9,504.7 821.3,496.7 821,511.1 820.4,495.8 819.9,507.2 819.5,469 819.1,483.9 818.5,494 818,506 817.7,485.9 817,463.4 816.3,504.8 815.8,494.6 815.3,506.2 814.6,500 814.2,504.3 813.5,500.9 812.8,486.1 812.4,491.3 811.8,481.1 811.2,501.4 810.8,498.3 810.1,497.4 809.5,472.4 808.9,509.2 808.5,493.4 808.1,490.6 807.8,504.2 807.3,502.7 806.9,505.7 806.5,497.9 805.8,491.9 805.1,496.1 804.6,493.9 804.2,496 803.5,496.3 802.8,497.1 802.2,474.6 801.5,513 801,503.4 800.4,504.8 799.9,478.2 799.3,491.3 798.8,492.1 798.3,462.2 797.7,506.5 797.2,510.9 796.5,509.1 795.9,493.6 795.3,493.6 794.8,498.1 794.2,474.4 793.7,479.4 793.3,502.1 792.8,502.4 792.4,493.6 791.8,500.7 791.2,504.5 790.7,499.1 790.2,507 789.7,489.2 789.1,494.5 788.6,475.8 788.2,501.9 787.5,503.8 787.2,477.6 786.8,494.6 786.3,495.8 785.9,515.1 785.4,482.8 784.9,495.2 784.4,477.4 783.7,480.4 783.2,502.9 782.5,499.3 781.9,506.1 781.4,483.5 781,490.6 780.3,483.2 779.9,476.6 779.4,502.6 779,485.3 778.4,503.8 778,485.1 777.5,508 777.1,488.4 776.7,489.2 776,495.7 775.4,488.3 774.9,482.8 774.2,491.3 773.6,504.3 773.1,498.1 772.4,506.6 772,486.4 771.6,499.4 771.1,501.7 770.6,514.3 770,498 769.3,509.5 768.7,505.9 768.3,484.4 767.6,497.4 767,487.3 766.6,487.2 766.2,497.4 765.8,493.9 765.2,497.4 764.5,505 764,506.1 763.5,490.7 762.8,501.9 762.2,495.9 761.7,486.2 761.1,475.5 760.7,491 760.1,497.6 759.5,493.2 758.9,491 758.2,476.9 757.6,499.3 757.3,500.3 756.6,488.6 756,495 755.5,506.5 754.9,509.8 754.2,477.2 753.6,503.8 753.2,488.5 752.8,484.7 752.4,496.9 751.9,495.7 751.5,485.4 750.8,479.2 750.1,494.7 749.4,511.1 748.9,502.5 748.2,498.1 747.6,509.9 747.1,495.6 746.7,478 746.3,493.5 746,507.2 745.5,500.8 745,517 744.6,502.7 744,493.2 743.3,511.2 742.7,489 742,501.3 741.3,494.1 740.6,503.2 740.2,514.7 739.8,483.6 739.1,476.7 738.6,502.1 738,473.4 737.6,494.1 737.1,493.7 736.7,498.6 736.1,487.4 735.4,513.5 734.7,491.8 734.2,491.1 733.8,473 733.3,497.3 732.9,494.8 732.4,498 731.6,495.3 731.3,509.5 730.9,500.4 730.3,492.3 729.8,492.6 729.4,487 729,483.7 728.6,504.2 728.1,499.3 727.6,509 726.9,497.6 726.2,460 725.9,502.9 725.4,506.3 724.9,474.4 724.5,503.3 724.1,493 723.5,476 722.9,495.5 722.5,487.8 722.1,480.2 721.7,481.7 721.3,502.8 721,514.2 720.6,493.3 720.2,489.2 719.8,505.3 719.4,508.4 719,477.2 718.7,500.8 718.1,501.4 717.7,500.1 717.2,490.7 716.7,487.4 716.1,483.3 715.4,499.3 714.8,479.4 714.1,485.6 713.8,489.2 713.2,489.9 712.6,494.3 712.1,506.7 711.5,490.2 710.8,489.4 710.2,482.1 709.7,491 709.2,483.2 708.9,492.2 708.5,470.4 707.9,496.8 707.4,498.8 707,479.9 706.6,491 706.2,494.2 705.8,469.3 705.1,492.7 704.4,495.6 703.9,503 703.4,469.4 703,498.5 702.3,484.3 701.7,479.3 701,491.8 700.5,480 700,495.2 699.6,498.1 698.9,502.9 698.4,476.9 698,491.4 697.6,501.6 697,485.1 696.7,504.6 696.3,504.5 695.9,478.9 695,494.5 694.4,516.1 693.3,495.9 692.4,488.5 691.6,500.4 690.4,487.8 689.1,498.3 688.1,484.1 687,494.7 686.3,489.3 685.3,465.6 684.3,496.7 683.1,494.6 681.9,502.3 680.9,505.5 679.9,510.1 678.9,494.2 677.8,500.5 677,482.5 675.8,485.6 674.8,485.2 673.6,510.7 672.6,496.2 672,508.3 671,514.4 670.3,492.1 669.2,505.1 668.3,499.9 667.6,489 666.3,508.7 665.5,488 664.4,506.1 663.2,504.2 662.2,502 661.2,469.4 660.4,475.7 659.3,476.8 658.2,495.5 657.4,491.2 656.4,507.4 655.4,503.7 654.6,478.9 653.7,513.7 652.6,509.1 651.9,504.9 651.3,504.4 650.6,504.5 649.6,484.4 648.8,491.8 647.7,497.1 646.7,477.7 646,499.8 644.8,498.9 644,489.8 643.3,496.5 642.6,510.2 641.8,507.9 640.6,478.9 640,502 638.7,504.7 637.8,488.1 636.8,497.5 635.6,484.7 634.5,491.1 633.8,499.6 633.1,498.7 631.9,468.9 628.2,486.5 625.3,492.4 622.5,492.8 618.7,493.2 616,492.3 612,488.9 609.3,484.3 605.7,485.2 601.7,491.6 598.8,496.9 594.5,500.2 591.5,495.3 588,496.6" fill="rgba(238,133,54,0.2)"/><polyline points="588,472.8 591.5,474.6 594.5,475.2 598.8,475 601.7,470.9 605.7,459.9 609.3,461.1 612,466.4 616,472.4 618.7,473 622.5,470.7 625.3,467.6 628.2,464.7 631.9,440.1 633.1,475.4 633.8,466.1 634.5,457.1 635.6,466.6 636.8,477.8 637.8,456 638.7,477.5 640,480.9 640.6,457.5 641.8,481.4 642.6,479.8 643.3,470 644,460.7 644.8,474.5 646,469 646.7,449 647.7,478.9 648.8,458.8 649.6,460.6 650.6,478.7 651.3,468.7 651.9,476.5 652.6,473.5 653.7,478.5 654.6,450.1 655.4,476.2 656.4,480.9 657.4,463.9 658.2,464.1 659.3,458.9 660.4,457.1 661.2,451.8 662.2,480.2 663.2,480.9 664.4,481.3 665.5,469.4 666.3,472.4 667.6,455.1 668.3,480.2 669.2,477.5 670.3,468.6 671,481.1 672,479.4 672.6,476 673.6,477.9 674.8,456.6 675.8,461.6 677,450.3 677.8,467.9 678.9,467.4 679.9,478.9 680.9,474.6 681.9,469.4 683.1,470.6 684.3,464.5 685.3,436.8 686.3,452.9 687,472.2 688.1,452.7 689.1,477.1 690.4,462.9 691.6,479 692.4,452.6 693.3,464.6 694.4,481.3 695,467.8 695.9,450.1 696.3,478.9 696.7,469.2 697,462.6 697.6,481 698,462.2 698.4,459.7 698.9,468.2 699.6,480.9 700,474.7 700.5,461.3 701,460.2 701.7,454.2 702.3,455.7 703,474.9 703.4,452.8 703.9,469.9 704.4,474.7 705.1,474 705.8,452.2 706.2,468.4 706.6,457.1 707,460.8 707.4,469.9 707.9,476.4 708.5,450.8 708.9,467.8 709.2,466.1 709.7,459.5 710.2,461 710.8,464.8 711.5,460.4 712.1,479.3 712.6,473.6 713.2,469.1 713.8,467.6 714.1,463.7 714.8,459.5 715.4,463.4 716.1,453.7 716.7,462.3 717.2,464.4 717.7,467 718.1,480.6 718.7,477.2 719,458.8 719.4,477 719.8,477.6 720.2,472.4 720.6,456.7 721,479 721.3,477.9 721.7,460.9 722.1,453.5 722.5,457 722.9,468 723.5,458.2 724.1,462.9 724.5,478.3 724.9,452.6 725.4,479.3 725.9,478.6 726.2,431.2 726.9,478.5 727.6,477.5 728.1,464.2 728.6,475.3 729,459.8 729.4,467.1 729.8,470.4 730.3,459.2 730.9,468.4 731.3,476.7 731.6,459.2 732.4,465.5 732.9,464.1 733.3,465.4 733.8,452.4 734.2,464.2 734.7,473.5 735.4,479.6 736.1,454.5 736.7,481.3 737.1,458.7 737.6,473.8 738,455.6 738.6,465.9 739.1,451.3 739.8,462.2 740.2,481.5 740.6,478.9 741.3,474.6 742,476.5 742.7,463.3 743.3,477.9 744,474.6 744.6,470 745,488.3 745.5,480.3 746,477.2 746.3,462.5 746.7,453.2 747.1,465 747.6,479.1 748.2,479.3 748.9,481.4 749.4,479.8 750.1,460.8 750.8,460.2 751.5,465.5 751.9,459.7 752.4,462.1 752.8,459.7 753.2,467.4 753.6,474.4 754.2,458.1 754.9,481.3 755.5,479.7 756,461.7 756.6,466 757.3,472 757.6,465.2 758.2,459 758.9,471.3 759.5,459.5 760.1,463.6 760.7,457.4 761.1,453 761.7,463.6 762.2,462.5 762.8,480.1 763.5,463.8 764,479 764.5,478.7 765.2,474.5 765.8,458.7 766.2,477.1 766.6,456.8 767,459 767.6,470.5 768.3,465.8 768.7,475.7 769.3,474.9 770,462.3 770.6,479.8 771.1,477.3 771.6,479.4 772,462.1 772.4,480.7 773.1,479.6 773.6,480.7 774.2,457.6 774.9,458.1 775.4,456.5 776,462.2 776.7,468.7 777.1,453.7 777.5,475.4 778,456 778.4,475.1 779,465.1 779.4,467.3 779.9,459.1 780.3,458.3 781,465.6 781.4,453.5 781.9,475.5 782.5,463.5 783.2,472.9 783.7,461.1 784.4,457.5 784.9,478.3 785.4,463.9 785.9,479 786.3,470.6 786.8,463.4 787.2,455.1 787.5,472.4 788.2,468.6 788.6,458.2 789.1,464.2 789.7,468.2 790.2,477.2 790.7,479.2 791.2,477.6 791.8,468 792.4,464.1 792.8,472 793.3,477.6 793.7,459.1 794.2,445.6 794.8,467.3 795.3,473.6 795.9,476 796.5,474.7 797.2,477.6 797.7,471 798.3,433.5 798.8,459.8 799.3,458 799.9,454.8 800.4,475.3 801,474.7 801.5,480.1 802.2,451.3 802.8,472.8 803.5,479.1 804.2,463.6 804.6,467.2 805.1,461.9 805.8,475.2 806.5,478.4 806.9,477.5 807.3,468.8 807.8,475.1 808.1,461.1 808.5,474 808.9,475.3 809.5,454 810.1,474.5 810.8,478.6 811.2,467.6 811.8,463.9 812.4,455.9 812.8,456.9 813.5,473.2 814.2,472.2 814.6,476.5 815.3,473.5 815.8,465.4 816.3,479.7 817,434.6 817.7,464.4 818,474.7 818.5,461.3 819.1,464 819.5,451.7 819.9,476.7 820.4,468.7 821,477.7 821.3,474.6 821.9,469.1 822.4,461 822.7,478.7 823.2,469.9 823.8,476.8 824.3,469.6 824.6,471.1 825.4,464.7 826,459.7 826.7,481.1 827.1,463.5 827.5,467.5 827.9,456.8 828.5,472.7 828.9,470.8 829.3,476.5 829.8,467.4 830.5,455.8 831.1,463.9 831.6,461.1 831.9,460.8 832.6,460 833.2,463.4 833.8,461.4 834.2,461.5 834.5,479.3 835.1,465.1 835.6,461.3 836,460.3 836.7,476.8 837.2,462.2 837.9,480.2 838.2,480.3 838.9,472.8 839.3,461.7 839.9,450.1 840.4,466.9 840.9,480 841.4,467.4 842.1,480.1 842.6,468.1 842.9,479.7 843.5,466.1 843.9,466.4 844.3,480.8 844.7,458.5 845,469.9 845.4,464.6 845.9,479 846.3,479.9 846.9,455 847.4,477.5 847.9,481.2 848.3,479.2 848.8,461.7 849.1,475 849.5,461.4 849.9,457.3 850.5,480.6 851,460.8 851.4,450.7 851.9,464.7 852.6,454.6 853,458.1 853.7,461.7 854.2,469.3 854.7,465.7 855.3,458.8 855.8,475.3 856.4,463.2 857,462.5 857.7,463.1 858.1,476.9 858.8,458.8 859.4,481.6 860,476.2 860.5,454 860.9,479.3 861.3,475.3 861.7,462.8 862,467.8 862.6,457.6 863.1,465 863.4,478.8 863.8,462.9 864.5,459.8 865.1,456.2 865.7,459.3 866.2,475.1 866.6,471.5 867,461.3 867.5,470.1 867.9,458 868.4,477.5 868.9,457.5 869.6,447.9 870.3,477.5 870.8,466.5 871.3,465.9 872,459.4 872.4,455.9 872.9,481.1 873.2,476.2 873.7,459.3 874.2,477.6 874.7,475.8 875.1,481 875.7,479.1 876,462.3 876.4,478.9 876.8,463.6 877.3,473.6 877.6,475 878,456.9 878.4,475.1 878.8,461.6 879.4,481.3 879.9,469.2 880.5,472.5 881.1,475 881.7,474.5 882.4,466.3 882.9,473.9 883.3,468 884.1,479.2 884.4,464 885.1,461.8 885.6,467.2 886,472.5 886.6,476.2 887.3,475 887.9,463.7 888.5,456.8 889.2,477 889.5,472.4 890.1,463.5 890.6,477.3 891.3,463.3 891.9,467.8 892.6,463.6 893.1,476.8 893.8,464.7 894.4,477.5 895,468.5 895.4,453.8 895.8,452.6 896.1,464.2 896.6,480.8 897,478.4 897.6,475.4 898.2,463.4 898.8,481.1 899.3,465.5 899.9,458.7 900.4,463.2 900.8,478.3 901.4,479.4 902,459.1 902.6,463.4 903.1,455.7 903.7,466 904,472.8 904.7,468.3 905.1,476.3 905.4,479.5 905.9,476.9 906.5,466.6 906.9,468 907.5,476.7 908.2,475.2 908.8,467 909.2,465 909.8,459.5 910.4,475.2 911,479.5 911.6,458.3 912.1,442.3 912.5,469.9 912.9,468 913.3,478.2 913.9,467 914.4,472.2 914.9,481.1 915.3,461.3 915.6,459.4 916,469.3 916.6,474.5 917.2,447.6 917.8,479.3 918.3,464.5 918.8,454.4 919.3,459.9 919.8,465.5 920.2,477.6 920.9,478.5 921.3,457.3 922,451.6 922.7,454.6 923,459.6 923.5,475.4 924.2,471.7 924.9,464.3 925.4,440.1 925.8,460.2 926.2,477 926.9,472.5 927.4,457.9 927.9,445.6 928.3,463.8 928.8,457.5 929.5,447.7 929.9,462 930.6,463 931.1,459.1 931.8,439 932.4,460.3 932.8,463.8 933.5,475.1 934,475 934.3,478.3 934.7,465.6 935.2,457 935.7,461.6 936.1,459 936.5,452.3 937,439 937.4,478.4 938.1,457.2 938.4,479.9 939.1,471.9 939.7,451.1 940.1,460.3 940.8,444.8 941.4,453.5 942.1,445 942.5,475.5 943,471.6 943.5,461.6 944.2,474.8 944.7,437.3 945.2,481.3 945.7,480.8 946.2,451.2 946.5,474.1 946.9,475.3 947.5,475.4 948,478 948.7,451.6 949.1,452.7 949.5,468.9 950,475.4 950.5,477.4 950.9,457.8 951.6,461.6 952.3,460.9 953,472.5 953.5,449 954.2,481.4 954.9,479.5 955.5,479.7 956.1,480 956.4,454.5" fill="none" stroke="#ee8536" stroke-width="4.3" stroke-linejoin="miter" stroke-miterlimit="2"/>
<line x1="1087" y1="78" x2="1087" y2="510" stroke="#eeeeee" stroke-width="2"/>
<text x="1087" y="532" text-anchor="middle" font-size="20" fill="#444">2010</text>
<line x1="1250" y1="78" x2="1250" y2="510" stroke="#eeeeee" stroke-width="2"/>
<text x="1250" y="532" text-anchor="middle" font-size="20" fill="#444">2015</text>
<text x="1413" y="532" text-anchor="middle" font-size="20" fill="#444">2020</text>
<line x1="1040.5" y1="100" x2="1415" y2="100" stroke="#eeeeee" stroke-width="2"/>
<text x="1037.4" y="107.8" text-anchor="end" font-size="20" fill="#444">200</text>
<line x1="1040.5" y1="238.5" x2="1415" y2="238.5" stroke="#eeeeee" stroke-width="2"/>
<text x="1037.4" y="246.3" text-anchor="end" font-size="20" fill="#444">150</text>
<line x1="1040.5" y1="376.7" x2="1415" y2="376.7" stroke="#eeeeee" stroke-width="2"/>
<text x="1037.4" y="384.5" text-anchor="end" font-size="20" fill="#444">100</text>
<text x="1227" y="602" text-anchor="middle" font-size="24.4" fill="#444">Bed and breakfast</text>
<polyline points="1069.5,377.5 1181.4,429 1251,488.6 1294,307 1296,282 1297.4,98.7 1352.4,157.4 1386.4,391 1390,228 1406.5,460.8" fill="none" stroke="#ee8536" stroke-width="4.3" stroke-linejoin="miter" stroke-miterlimit="2"/>
<line x1="1544" y1="78" x2="1544" y2="510" stroke="#eeeeee" stroke-width="2"/>
<text x="1544" y="532" text-anchor="middle" font-size="20" fill="#444">2010</text>
<line x1="1707" y1="78" x2="1707" y2="510" stroke="#eeeeee" stroke-width="2"/>
<text x="1707" y="532" text-anchor="middle" font-size="20" fill="#444">2015</text>
<text x="1870" y="532" text-anchor="middle" font-size="20" fill="#444">2020</text>
<line x1="1497.5" y1="117.8" x2="1872" y2="117.8" stroke="#eeeeee" stroke-width="2"/>
<text x="1494.4" y="125.6" text-anchor="end" font-size="20" fill="#444">10k</text>
<line x1="1497.5" y1="270.5" x2="1872" y2="270.5" stroke="#eeeeee" stroke-width="2"/>
<text x="1494.4" y="278.3" text-anchor="end" font-size="20" fill="#444">5k</text>
<line x1="1497.5" y1="423.6" x2="1872" y2="423.6" stroke="#c6c6c6" stroke-width="2"/>
<text x="1494.4" y="431.4" text-anchor="end" font-size="20" fill="#444">0</text>
<text x="1684" y="602" text-anchor="middle" font-size="24.4" fill="#444">Boutique hotel</text>
<polyline points="1628.9,421.5 1733.9,419.3 1788.6,420.8 1800.8,419.6 1804.5,422.1 1809.3,413.9 1838.8,415.7 1845.8,419 1851.6,420.2 1852.7,117.8 1853.3,117.8 1855.3,409.9 1859.2,248.6 1860.4,117.8" fill="none" stroke="#3b75af" stroke-width="4.3" stroke-linejoin="miter" stroke-miterlimit="2"/><polygon points="1628.9,382.5 1733.9,378.9 1788.6,379.5 1800.8,375.8 1804.5,379.5 1809.3,371.9 1837.3,376.4 1841.9,356.7 1846.4,377.9 1850.7,379.5 1850.7,461.6 1846.4,458.6 1841.9,441.8 1837.3,457.1 1809.3,455.5 1804.5,460.1 1800.8,459.2 1788.6,460.1 1733.9,458.6 1628.9,459.2" fill="rgba(238,133,54,0.2)"/><polyline points="1628.9,421.5 1733.9,419 1788.6,421.2 1800.8,419.9 1804.5,422.7 1809.3,413.5 1838.8,416 1840.4,403.2 1843.4,403.2 1845.8,419 1850.1,419.6 1851.9,470.7 1852.8,198.4 1855,257.8 1858.6,248.6 1860.1,117.8 1861.7,117.8 1863.5,403.2" fill="none" stroke="#ee8536" stroke-width="4.3" stroke-linejoin="miter" stroke-miterlimit="2"/>
<line x1="173" y1="692" x2="173" y2="1124" stroke="#eeeeee" stroke-width="2"/>
<text x="173" y="1146" text-anchor="middle" font-size="20" fill="#444">2010</text>
<line x1="337" y1="692" x2="337" y2="1124" stroke="#eeeeee" stroke-width="2"/>
<text x="337" y="1146" text-anchor="middle" font-size="20" fill="#444">2015</text>
<text x="501" y="1146" text-anchor="middle" font-size="20" fill="#444">2020</text>
<line x1="126.5" y1="737.6" x2="501" y2="737.6" stroke="#eeeeee" stroke-width="2"/>
<text x="123.4" y="745.4" text-anchor="end" font-size="20" fill="#444">120</text>
<line x1="126.5" y1="836.8" x2="501" y2="836.8" stroke="#eeeeee" stroke-width="2"/>
<text x="123.4" y="844.6" text-anchor="end" font-size="20" fill="#444">100</text>
<line x1="126.5" y1="934.4" x2="501" y2="934.4" stroke="#eeeeee" stroke-width="2"/>
<text x="123.4" y="942.2" text-anchor="end" font-size="20" fill="#444">80</text>
<line x1="126.5" y1="1033.6" x2="501" y2="1033.6" stroke="#eeeeee" stroke-width="2"/>
<text x="123.4" y="1041.4" text-anchor="end" font-size="20" fill="#444">60</text>
<text x="313" y="1216" text-anchor="middle" font-size="24.4" fill="#444">Bungalow</text>
<polyline points="228,904.9 331,712.8 343.6,836.8 372.3,1009 378,1009 422.8,712.8 496,1102" fill="none" stroke="#ee8536" stroke-width="4.3" stroke-linejoin="miter" stroke-miterlimit="2"/>
<line x1="630" y1="692" x2="630" y2="1124" stroke="#eeeeee" stroke-width="2"/>
<text x="630" y="1146" text-anchor="middle" font-size="20" fill="#444">2010</text>
<line x1="793" y1="692" x2="793" y2="1124" stroke="#eeeeee" stroke-width="2"/>
<text x="793" y="1146" text-anchor="middle" font-size="20" fill="#444">2015</text>
<text x="956" y="1146" text-anchor="middle" font-size="20" fill="#444">2020</text>
<line x1="583.5" y1="764.2" x2="958" y2="764.2" stroke="#eeeeee" stroke-width="2"/>
<text x="580.4" y="772" text-anchor="end" font-size="20" fill="#444">140</text>
<line x1="583.5" y1="868.4" x2="958" y2="868.4" stroke="#eeeeee" stroke-width="2"/>
<text x="580.4" y="876.2" text-anchor="end" font-size="20" fill="#444">120</text>
<line x1="583.5" y1="973" x2="958" y2="973" stroke="#eeeeee" stroke-width="2"/>
<text x="580.4" y="980.8" text-anchor="end" font-size="20" fill="#444">100</text>
<line x1="583.5" y1="1076.7" x2="958" y2="1076.7" stroke="#eeeeee" stroke-width="2"/>
<text x="580.4" y="1084.5" text-anchor="end" font-size="20" fill="#444">80</text>
<text x="770" y="1216" text-anchor="middle" font-size="24.4" fill="#444">Camper/RV</text>
<polyline points="808.5,712.8 856,1103.3 936.9,1058.2" fill="none" stroke="#ee8536" stroke-width="4.3" stroke-linejoin="miter" stroke-miterlimit="2"/>
<line x1="1087" y1="692" x2="1087" y2="1124" stroke="#eeeeee" stroke-width="2"/>
<text x="1087" y="1146" text-anchor="middle" font-size="20" fill="#444">2010</text>
<line x1="1250" y1="692" x2="1250" y2="1124" stroke="#eeeeee" stroke-width="2"/>
<text x="1250" y="1146" text-anchor="middle" font-size="20" fill="#444">2015</text>
<text x="1413" y="1146" text-anchor="middle" font-size="20" fill="#444">2020</text>
<line x1="1040.5" y1="817" x2="1415" y2="817" stroke="#eeeeee" stroke-width="2"/>
<text x="1037.4" y="824.8" text-anchor="end" font-size="20" fill="#444">1000</text>
<line x1="1040.5" y1="947.5" x2="1415" y2="947.5" stroke="#eeeeee" stroke-width="2"/>
<text x="1037.4" y="955.3" text-anchor="end" font-size="20" fill="#444">500</text>
<line x1="1040.5" y1="1078.7" x2="1415" y2="1078.7" stroke="#c6c6c6" stroke-width="2"/>
<text x="1037.4" y="1086.5" text-anchor="end" font-size="20" fill="#444">0</text>
<text x="1227" y="1216" text-anchor="middle" font-size="24.4" fill="#444">Condominium</text>
<polyline points="1067.4,1027.4 1078.7,1008.5 1080.2,1031.3 1085.7,1034.4 1087.8,949.2 1089.9,1043.5 1092.4,1045 1098.4,1031.3 1106,1040.5 1113.7,1048.1 1121.3,987.2 1127.3,1000.9 1129.2,1051.1 1132.5,1058.7 1134.9,1026.8 1138,1045 1141,1014.6 1145,1058.7 1147.1,1004 1151.7,1001.8 1153.2,1038.9 1157.1,1029.8 1160.8,1022.2 1163.8,1026.8 1166.6,974.4 1168.4,1052.1 1170.1,987.2 1172,1050.3 1173.4,997.6 1176,961.4 1177.9,1061.2 1180.6,1050.7 1182.6,909.7 1185.4,1046.6 1188,1045.3 1189.4,1066 1191.1,1027.5 1193.8,883.2 1195.9,1023.1 1198.8,1037.3 1200.8,1039.5 1202.2,1005.5 1204.6,1055.4 1207.1,1044.5 1208.9,975.1 1210.4,1054.8 1212.3,1069.8 1215.1,1011.4 1217.6,1031.1 1219.2,1032.9 1220.9,949.2 1222.4,1069.8 1223.9,1070.4 1226.5,1037.1 1228.1,909.7 1230.3,999.9 1232.4,883.2 1234.1,1024.7 1236.5,863.4 1238.1,1058.2 1240.5,956.8 1242,1043.4 1244,1063.7 1245.7,1052.2 1247.5,1002.4 1250.3,1026.8 1252.9,1062.9 1254.7,846.7 1257.5,1024.9 1259.2,999.4 1261.1,1041.3 1263.8,1054.1 1266.1,1010.7 1267.7,1007 1270.5,1035.8 1272.2,1022 1274,1048.7 1276.5,972 1278.4,1055.5 1280.2,935.5 1281.7,1042.7 1283.2,921.8 1285.5,899 1287.2,1032.3 1289.5,1041.5 1291.4,1056.9 1293.5,1033.4 1296.3,1047.7 1298.4,981.1 1300.6,1045.7 1303.3,714.1 1305,1042 1306.6,1065.3 1309.3,1027.4 1311.9,1056.8 1313.7,1002.4 1315.4,1059.7 1317.8,1038 1320.6,1044.3 1322.3,1053.7 1325.1,1070.9 1327.8,1048 1330.1,1023.1 1332.1,1007 1333.7,1051.6 1335.1,1021.9 1337.9,969 1339.7,1062.9 1342.1,1024.6 1343.9,1057.2 1346.5,1017.4 1348.8,923.3 1350.6,1064.5 1352.2,1047.1 1354.7,1047.2 1356.1,1020.7 1357.9,1036.7 1360.1,1071.5 1362.7,1027.9 1365,1047.3 1366.8,1053.7 1369.6,948.6 1371.3,1067 1372.7,1002.5 1374.5,817.5 1376.5,1049 1378,1012.3 1379.6,1045.7 1381.5,1057.3 1383.8,948.6 1385.3,1061.8 1387.3,1064.8 1390,975.1 1392.8,1067.6 1395.2,1043.7 1397.6,961.4 1399.9,1003.8 1401.5,1001.6 1402.9,896 1404.3,1046.7 1407,905.1 1409.5,870.1 1410.8,1060.2" fill="none" stroke="#3b75af" stroke-width="4.3" stroke-linejoin="miter" stroke-miterlimit="2"/><polygon points="1067.4,950.7 1078.7,953.8 1084.8,933.7 1086.3,867.8 1087.8,982.9 1092.4,977.2 1098.4,923.3 1107.6,1011.8 1115.2,993.4 1122.8,992.8 1127.3,962.1 1130.4,945.9 1133.4,989.4 1138,955.2 1141.9,998 1147.1,979.1 1151.7,960.9 1156.2,980.3 1160.8,992.5 1165.4,1006.8 1166.6,953.3 1168.4,964 1170.1,985.7 1172,998 1173.4,964.2 1176,951.7 1177.9,982.5 1180.6,966.8 1182.6,967.5 1185.4,992.5 1188,999.8 1189.4,963.2 1191.1,955.4 1193.8,902.2 1195.9,984.8 1198.8,964.4 1200.8,999 1202.2,988.7 1204.6,995.4 1207.1,923.6 1208.9,962 1210.4,964.5 1212.3,991.1 1215.1,1025.6 1217.6,949.7 1219.2,996.8 1220.9,938.8 1222.4,968.7 1223.9,990.4 1226.5,991.3 1228.1,921 1230.3,989.5 1232.4,990.8 1234.1,977.2 1236.5,906.9 1238.1,991.8 1240.5,930.3 1242,1018.7 1244,992 1245.7,1002.9 1247.5,997.6 1250.3,973.8 1252.9,988 1254.7,972 1257.5,992.8 1259.2,971.1 1261.1,1017.1 1263.8,992.9 1266.1,1029.9 1267.7,1006 1270.5,925.6 1272.2,967.3 1274,987.4 1276.5,974.7 1278.4,995.4 1280.2,913.9 1281.7,971.7 1283.2,972.8 1285.5,976.9 1287.2,958.6 1289.5,963.2 1291.4,980.6 1293.5,936.5 1296.3,988.6 1298.4,1012 1300.6,967.5 1303.3,912 1305,909.3 1306.6,998.6 1309.3,950.5 1311.9,1005.1 1313.7,997.4 1315.4,925.6 1317.8,1018.2 1320.6,1001.7 1322.3,961.4 1325.1,970.4 1327.8,964.4 1330.1,986.7 1332.1,987.2 1333.7,992.8 1335.1,987.9 1337.9,914.8 1339.7,1001.2 1342.1,1006.4 1343.9,1015.8 1346.5,994.1 1348.8,920 1350.6,992.5 1352.2,983 1354.7,1012.2 1356.1,1005.7 1357.9,1002.1 1360.1,976.5 1362.7,1013.8 1365,974.1 1366.8,993.9 1369.6,930.8 1371.3,984.1 1372.7,985.6 1374.5,956 1376.5,982.4 1378,987.3 1379.6,1016.4 1381.5,981.8 1383.8,939.8 1385.3,997.9 1387.3,1002.3 1390,930.8 1392.8,993.2 1395.2,990.7 1397.6,988.7 1399.9,878.3 1401.5,982.5 1402.9,1003.7 1404.3,989 1407,1021.7 1409.5,873.9 1411.4,978.1 1411.4,1084.6 1409.5,990 1407,1104.4 1404.3,1111 1402.9,1092.4 1401.5,1098.5 1399.9,981.3 1397.6,1094.9 1395.2,1097.9 1392.8,1082.5 1390,1039.5 1387.3,1085.7 1385.3,1084.8 1383.8,1053.1 1381.5,1100.4 1379.6,1097.9 1378,1084.4 1376.5,1064 1374.5,1031.9 1372.7,1081.8 1371.3,1078.9 1369.6,1036.9 1366.8,1085.6 1365,1042.2 1362.7,1082.5 1360.1,1106.5 1357.9,1105.1 1356.1,1101.6 1354.7,1106.3 1352.2,1086.6 1350.6,1072.4 1348.8,1030.4 1346.5,1089 1343.9,1117 1342.1,1098.1 1339.7,1097.6 1337.9,1036.5 1335.1,1080.5 1333.7,1085.7 1332.1,1102.2 1330.1,1094.2 1327.8,1058.6 1325.1,1054.4 1322.3,1089.5 1320.6,1093.3 1317.8,1098 1315.4,1062 1313.7,1100 1311.9,1079.3 1309.3,1063.4 1306.6,1112 1305,1032.2 1303.3,1029.1 1300.6,1078.7 1298.4,1093.4 1296.3,1096.2 1293.5,1045.3 1291.4,1106.2 1289.5,1070.7 1287.2,1069.6 1285.5,1070.7 1283.2,1076.3 1281.7,1077.4 1280.2,1019.5 1278.4,1086 1276.5,1086.6 1274,1054.6 1272.2,1085.6 1270.5,1035.5 1267.7,1112.7 1266.1,1100.6 1263.8,1102 1261.1,1092.2 1259.2,1060.9 1257.5,1081.3 1254.7,1071.1 1252.9,1098.2 1250.3,1068.8 1247.5,1086.6 1245.7,1088.8 1244,1096.5 1242,1103 1240.5,1029.6 1238.1,1097.6 1236.5,1017.2 1234.1,1098.9 1232.4,1101 1230.3,1081.4 1228.1,1053.8 1226.5,1103.9 1223.9,1088.6 1222.4,1062 1220.9,1024.6 1219.2,1104.2 1217.6,1066.7 1215.1,1097.3 1212.3,1078.2 1210.4,1077.9 1208.9,1083 1207.1,1056 1204.6,1102.5 1202.2,1113.4 1200.8,1079.4 1198.8,1074.4 1195.9,1089.5 1193.8,1019.3 1191.1,1058 1189.4,1048.1 1188,1111.4 1185.4,1095.4 1182.6,1072.2 1180.6,1081.5 1177.9,1057.2 1176,1062.4 1173.4,1036.3 1172,1099.7 1170.1,1060.9 1168.4,1066.2 1166.6,1064.3 1165.4,1126.8 1160.8,1115.2 1156.2,1099.7 1151.7,1079.9 1147.1,1101.3 1141.9,1109.3 1138,1069.2 1133.4,1116.5 1130.4,1071.7 1127.3,1089.6 1122.8,1112.2 1115.2,1105.7 1107.6,1127.7 1098.4,1035.2 1092.4,1085.1 1087.8,1091.3 1086.3,973.6 1084.8,1041.2 1078.7,1059.6 1067.4,1057.2" fill="rgba(238,133,54,0.2)"/><polyline points="1067.4,1004.9 1078.7,1007.9 1084.8,984.2 1086.3,929.4 1087.8,1043.5 1092.4,1035.9 1098.4,991.8 1107.6,1072.4 1115.2,1051.1 1122.8,1046.5 1127.3,1032.9 1130.4,1011.6 1133.4,1060.2 1138,1008.5 1141.9,1054.1 1147.1,1051.1 1151.7,1010 1156.2,1029.8 1160.8,1049.6 1165.4,1064.8 1166.6,1004 1168.4,1031.6 1170.1,1018 1172,1047.5 1173.4,1002.4 1176,1017 1177.9,1018.8 1180.6,1014.2 1182.6,1008.5 1185.4,1047.2 1188,1054 1189.4,1013.3 1191.1,1021.4 1193.8,953.8 1195.9,1051.5 1198.8,1028.2 1200.8,1044.6 1202.2,1045.4 1204.6,1050 1207.1,987.2 1208.9,1030.7 1210.4,1009.5 1212.3,1040.8 1215.1,1053.5 1217.6,1007.7 1219.2,1051.4 1220.9,979.6 1222.4,1012.6 1223.9,1042.1 1226.5,1052.9 1228.1,984.2 1230.3,1035 1232.4,1033.9 1234.1,1044.6 1236.5,969 1238.1,1053.1 1240.5,972 1242,1047 1244,1030 1245.7,1033.5 1247.5,1051 1250.3,1025 1252.9,1032 1254.7,1010 1257.5,1025 1259.2,1017.9 1261.1,1054.6 1263.8,1045.5 1266.1,1057.7 1267.7,1043.4 1270.5,972 1272.2,1030.3 1274,1018.2 1276.5,1027.8 1278.4,1036.5 1280.2,950.7 1281.7,1030.5 1283.2,1034.8 1285.5,1017.3 1287.2,1020.7 1289.5,1019.2 1291.4,1042.3 1293.5,1002.9 1296.3,1036 1298.4,1052.7 1300.6,1012 1303.3,967.5 1305,970.5 1306.6,1056.4 1309.3,1020.2 1311.9,1036 1313.7,1037.7 1315.4,993.3 1317.8,1050.1 1320.6,1039.2 1322.3,1028.7 1325.1,1010.9 1327.8,1018.6 1330.1,1032.6 1332.1,1035.1 1333.7,1042.7 1335.1,1041.3 1337.9,984.2 1339.7,1048.9 1342.1,1043.9 1343.9,1049.4 1346.5,1040.9 1348.8,973.5 1350.6,1034.2 1352.2,1036 1354.7,1057 1356.1,1045.6 1357.9,1039.8 1360.1,1046.4 1362.7,1046.4 1365,1002.5 1366.8,1040.7 1369.6,996.3 1371.3,1038.4 1372.7,1043.4 1374.5,991.8 1376.5,1019.5 1378,1017.8 1379.6,1054.2 1381.5,1048.7 1383.8,988.7 1385.3,1035.3 1387.3,1050.9 1390,979.6 1392.8,1047.1 1395.2,1045.8 1397.6,1035.9 1399.9,947.7 1401.5,1038.9 1402.9,1046.6 1404.3,1046 1407,1058.3 1409.5,920.3 1411.4,1032.9" fill="none" stroke="#ee8536" stroke-width="4.3" stroke-linejoin="miter" stroke-miterlimit="2"/>
<line x1="1544" y1="692" x2="1544" y2="1124" stroke="#eeeeee" stroke-width="2"/>
<text x="1544" y="1146" text-anchor="middle" font-size="20" fill="#444">2010</text>
<line x1="1707" y1="692" x2="1707" y2="1124" stroke="#eeeeee" stroke-width="2"/>
<text x="1707" y="1146" text-anchor="middle" font-size="20" fill="#444">2015</text>
<text x="1870" y="1146" text-anchor="middle" font-size="20" fill="#444">2020</text>
<line x1="1497.5" y1="773.7" x2="1872" y2="773.7" stroke="#eeeeee" stroke-width="2"/>
<text x="1494.4" y="781.5" text-anchor="end" font-size="20" fill="#444">1500</text>
<line x1="1497.5" y1="875" x2="1872" y2="875" stroke="#eeeeee" stroke-width="2"/>
<text x="1494.4" y="882.8" text-anchor="end" font-size="20" fill="#444">1000</text>
<line x1="1497.5" y1="976.2" x2="1872" y2="976.2" stroke="#eeeeee" stroke-width="2"/>
<text x="1494.4" y="984" text-anchor="end" font-size="20" fill="#444">500</text>
<line x1="1497.5" y1="1077" x2="1872" y2="1077" stroke="#c6c6c6" stroke-width="2"/>
<text x="1494.4" y="1084.8" text-anchor="end" font-size="20" fill="#444">0</text>
<text x="1684" y="1216" text-anchor="middle" font-size="24.4" fill="#444">Guest suite</text>
<polyline points="1572.1,1018.3 1594.9,1042 1604.1,1042 1609.2,1066.3 1614.7,1051.1 1620.8,1051.1 1629.9,1051.7 1639,1059.6 1642.1,1048.1 1643,1063.3 1652.7,1057.2 1661.9,1057.2 1672.5,1037.4 1680.1,1049.6 1687.7,1066.3 1692.3,1049.6 1699.9,1037.4 1710.5,1069.4 1715.7,1052.6 1724.2,1067.8 1730.3,1057.2 1735.8,1063.9 1740,1044.4 1744.9,1062.7 1751.6,1057.2 1754,1014.6 1755.6,714.1 1756.8,714.1 1758.9,1057.2 1765.3,1058.7 1769.8,1055.7 1778.4,1064.8 1780.5,1054.1 1786.6,1057.2 1791.1,1017.6 1791.7,1060.2 1797.2,1048.1 1805.4,1025.2 1814,1051.1 1818.5,1058.7 1823.1,1055.7 1824.6,1040.5 1826.1,1064.8 1830.7,1048.1 1836.8,1058.7 1842.9,1059.6 1848.9,1057.2 1853.5,1060.2 1855.9,1001.8 1859.6,1066.3 1862.6,1067.8 1867.2,1057.2" fill="none" stroke="#3b75af" stroke-width="4.3" stroke-linejoin="miter" stroke-miterlimit="2"/><polygon points="1572.1,997.9 1594.9,1002.7 1605,1000.8 1610.2,1028.9 1615.3,1011.8 1622.3,1025.8 1624.8,953 1629.9,1023.6 1641.2,1005.5 1643.6,1015.3 1653.3,1029.6 1660.3,1025.8 1663.4,1031.2 1677.1,1019.5 1683.8,984.4 1686.2,1034.7 1691.4,966.6 1699.9,1019.3 1709.6,1018.1 1715.1,1030.3 1721.2,1025 1722.7,943 1728.2,1038.3 1730.3,1017.4 1735.8,1012.1 1737.9,1014.9 1741.9,1011.3 1745.5,1039.2 1750.1,1038.4 1754,1037.6 1755.6,904.4 1757.7,1019.5 1766.8,1019.7 1768.3,1000.1 1769.2,1033 1777.5,1000.3 1780.5,1014.7 1786.6,1021.3 1788.1,981.2 1791.1,1021.4 1797.8,998.3 1815.5,1021.2 1822.2,988.1 1824.6,1013 1829.2,1015.9 1836.8,1009.4 1842.9,1044.1 1847.4,1006 1848.9,1035 1852,1041.9 1853.5,972.7 1858.7,1028.9 1862.6,975.1 1863.5,1032.8 1867.2,1018.3 1867.2,1102 1863.5,1107.3 1862.6,1051.6 1858.7,1108.2 1853.5,1055.5 1852,1120.8 1848.9,1113.6 1847.4,1083.3 1842.9,1124.1 1836.8,1095.1 1829.2,1092 1824.6,1090.1 1822.2,1072.4 1815.5,1102.8 1797.8,1071.7 1791.1,1093.8 1788.1,1055.9 1786.6,1096.2 1780.5,1093.1 1777.5,1078.6 1769.2,1115.8 1768.3,1075.1 1766.8,1103.5 1757.7,1097.5 1755.6,979.3 1754,1113.7 1750.1,1123 1745.5,1111.7 1741.9,1096 1737.9,1098.4 1735.8,1092.8 1730.3,1094.1 1728.2,1118.3 1722.7,1023.7 1721.2,1101.1 1715.1,1105.6 1709.6,1102.2 1699.9,1103.6 1691.4,1050.2 1686.2,1110.2 1683.8,1067.4 1677.1,1096.4 1663.4,1105.7 1660.3,1101.7 1653.3,1107.2 1643.6,1092.1 1641.2,1084.9 1629.9,1097.8 1624.8,1037.4 1622.3,1104.9 1615.3,1084.8 1610.2,1110.2 1605,1073.9 1594.9,1082.3 1572.1,1075.9" fill="rgba(238,133,54,0.2)"/><polyline points="1572.1,1035.3 1594.9,1039.5 1605,1037.4 1610.2,1064.8 1615.3,1048.7 1622.3,1061.7 1624.8,993.3 1629.9,1061.7 1641.2,1041.4 1643.6,1052.6 1653.3,1065.7 1660.3,1065.7 1663.4,1069.4 1677.1,1058.7 1683.8,1022.2 1686.2,1072.4 1691.4,1007 1699.9,1058.7 1709.6,1057.2 1715.1,1066.3 1721.2,1061.7 1722.7,982.7 1728.2,1074.8 1730.3,1057.2 1735.8,1049.6 1737.9,1054.8 1741.9,1051.7 1745.5,1075.4 1750.1,1077.9 1754,1077 1755.6,940.1 1757.7,1055.7 1766.8,1058.7 1768.3,1035.9 1769.2,1070.9 1777.5,1037.4 1780.5,1054.1 1786.6,1057.2 1788.1,1018.3 1791.1,1057.2 1797.8,1034.4 1815.5,1060.2 1822.2,1026.8 1824.6,1052.6 1829.2,1055.7 1836.8,1049.6 1842.9,1083 1847.4,1043.5 1848.9,1075.4 1852,1079.1 1853.5,1011.6 1858.7,1067.8 1862.6,1011.6 1863.5,1070.9 1867.2,1057.2" fill="none" stroke="#ee8536" stroke-width="4.3" stroke-linejoin="miter" stroke-miterlimit="2"/>
<line x1="173" y1="1306" x2="173" y2="1738" stroke="#eeeeee" stroke-width="2"/>
<text x="173" y="1760" text-anchor="middle" font-size="20" fill="#444">2010</text>
<line x1="337" y1="1306" x2="337" y2="1738" stroke="#eeeeee" stroke-width="2"/>
<text x="337" y="1760" text-anchor="middle" font-size="20" fill="#444">2015</text>
<text x="501" y="1760" text-anchor="middle" font-size="20" fill="#444">2020</text>
<line x1="126.5" y1="1325.8" x2="501" y2="1325.8" stroke="#eeeeee" stroke-width="2"/>
<text x="123.4" y="1333.6" text-anchor="end" font-size="20" fill="#444">250</text>
<line x1="126.5" y1="1420.5" x2="501" y2="1420.5" stroke="#eeeeee" stroke-width="2"/>
<text x="123.4" y="1428.3" text-anchor="end" font-size="20" fill="#444">200</text>
<text x="313" y="1830" text-anchor="middle" font-size="24.4" fill="#444"></text>
<polyline points="468,1327.2 465.4,1420" fill="none" stroke="#ee8536" stroke-width="4.3" stroke-linejoin="miter" stroke-miterlimit="2"/>
<line x1="630" y1="1306" x2="630" y2="1738" stroke="#eeeeee" stroke-width="2"/>
<text x="630" y="1760" text-anchor="middle" font-size="20" fill="#444">2010</text>
<line x1="793" y1="1306" x2="793" y2="1738" stroke="#eeeeee" stroke-width="2"/>
<text x="793" y="1760" text-anchor="middle" font-size="20" fill="#444">2015</text>
<text x="956" y="1760" text-anchor="middle" font-size="20" fill="#444">2020</text>
<line x1="583.5" y1="1365.8" x2="958" y2="1365.8" stroke="#eeeeee" stroke-width="2"/>
<text x="580.4" y="1373.6" text-anchor="end" font-size="20" fill="#444">300</text>
<text x="770" y="1830" text-anchor="middle" font-size="24.4" fill="#444"></text>
<polyline points="942,1327.8 923,1420" fill="none" stroke="#ee8536" stroke-width="4.3" stroke-linejoin="miter" stroke-miterlimit="2"/>
<line x1="1087" y1="1306" x2="1087" y2="1738" stroke="#eeeeee" stroke-width="2"/>
<text x="1087" y="1760" text-anchor="middle" font-size="20" fill="#444">2010</text>
<line x1="1250" y1="1306" x2="1250" y2="1738" stroke="#eeeeee" stroke-width="2"/>
<text x="1250" y="1760" text-anchor="middle" font-size="20" fill="#444">2015</text>
<text x="1413" y="1760" text-anchor="middle" font-size="20" fill="#444">2020</text>
<line x1="1040.5" y1="1327.8" x2="1415" y2="1327.8" stroke="#eeeeee" stroke-width="2"/>
<text x="1037.4" y="1335.6" text-anchor="end" font-size="20" fill="#444">1000</text>
<line x1="1040.5" y1="1413.6" x2="1415" y2="1413.6" stroke="#eeeeee" stroke-width="2"/>
<text x="1037.4" y="1421.4" text-anchor="end" font-size="20" fill="#444">800</text>
<text x="1227" y="1830" text-anchor="middle" font-size="24.4" fill="#444"></text>
<polyline points="1407.5,1327.8 1407.5,1420" fill="none" stroke="#ee8536" stroke-width="4.3" stroke-linejoin="miter" stroke-miterlimit="2"/>
<line x1="1544" y1="1306" x2="1544" y2="1738" stroke="#eeeeee" stroke-width="2"/>
<text x="1544" y="1760" text-anchor="middle" font-size="20" fill="#444">2010</text>
<line x1="1707" y1="1306" x2="1707" y2="1738" stroke="#eeeeee" stroke-width="2"/>
<text x="1707" y="1760" text-anchor="middle" font-size="20" fill="#444">2015</text>
<text x="1870" y="1760" text-anchor="middle" font-size="20" fill="#444">2020</text>
<line x1="1497.5" y1="1327.8" x2="1872" y2="1327.8" stroke="#eeeeee" stroke-width="2"/>
<text x="1494.4" y="1335.6" text-anchor="end" font-size="20" fill="#444">6000</text>
<text x="1684" y="1830" text-anchor="middle" font-size="24.4" fill="#444"></text>
<polyline points="1748.7,1327.8 1748.7,1420" fill="none" stroke="#3b75af" stroke-width="4.3" stroke-linejoin="miter" stroke-miterlimit="2"/>
</svg>
<svg class="b" style="left:2460px;top:28px" width="24" height="24" viewBox="0 0 24 24"><path d="M12.0 0 V24 M0 12.0 H24" stroke="#444" stroke-width="2.6" fill="none"/></svg>
<svg class="b" style="left:2512px;top:26px" width="32" height="32" viewBox="0 0 32 32"><path d="M27.5 13 A12 12 0 0 0 5.5 10" fill="none" stroke="#777" stroke-width="1.8"/><path d="M4.5 19 A12 12 0 0 0 26.5 22" fill="none" stroke="#777" stroke-width="1.8"/><path d="M28.5 4 V13 H19.5" fill="none" stroke="#777" stroke-width="1.8"/><path d="M3.5 28 V19 H12.5" fill="none" stroke="#777" stroke-width="1.8"/></svg>
<div class="t " style="left:2627px;top:27.0px;font-size:32px;line-height:32px;color:#444;font-weight:400;">Steps</div>
<svg class="b" style="left:2866px;top:28px" width="30" height="28" viewBox="0 0 30 28"><path d="M0.5 5.5 H27.7 M0.5 13.5 H27.7 M0.5 21.6 H27.7" stroke="#666" stroke-width="1.7"/><rect x="9.6" y="1.8" width="3.4" height="7.4" rx="1" fill="#fff" stroke="#666" stroke-width="1.6"/><rect x="18.6" y="9.8" width="3.4" height="7.4" rx="1" fill="#fff" stroke="#666" stroke-width="1.6"/><rect x="6" y="17.9" width="3.4" height="7.4" rx="1" fill="#fff" stroke="#666" stroke-width="1.6"/></svg>
<svg class="b" style="left:2465px;top:111px" width="14" height="8" viewBox="0 0 14 8"><path d="M0 0 H14 L7.0 8 Z" fill="#666"/></svg>
<div class="t " style="left:2490px;top:103.5px;font-size:25px;line-height:25px;color:#666;font-weight:700;">1. Data Catalog</div>
<div class="b" style="left:2465px;top:154px;width:431px;height:50px;background:#fff;border:2px solid #d5d5d5;border-radius:7px;box-sizing:border-box;"></div>
<div class="t " style="left:2482px;top:167.9px;font-size:24.2px;line-height:24.2px;color:#707070;font-weight:400;">Airbnb Listing Data for New Yor…</div>
<svg class="b" style="left:2854px;top:165px" width="26" height="26" viewBox="0 0 26 26"><path d="M20.5 14 V21 Q20.5 24 17.5 24 H5 Q2 24 2 21 V8.5 Q2 5.5 5 5.5 H12" fill="none" stroke="#777" stroke-width="2"/><path d="M10.5 15.5 L24 2 M16 1.5 H24.5 V10" fill="none" stroke="#777" stroke-width="2"/></svg>
<div class="t " style="left:2465px;top:221.5px;font-size:23px;line-height:23px;color:#999;font-weight:400;">Last Imported: 2022-01-04 1:59:49 PM</div>
<div class="b" style="left:2440px;top:260px;width:476px;height:154px;background:#4da673;"></div>
<svg class="b" style="left:2466px;top:291px" width="13" height="8" viewBox="0 0 13 8"><path d="M0 0 H13 L6.5 8 Z" fill="#fff"/></svg>
<div class="t " style="left:2490px;top:283.5px;font-size:25px;line-height:25px;color:#fff;font-weight:700;">2. Create Calculation (Mutate)...</div>
<svg class="b" style="left:2873px;top:286px" width="21" height="22" viewBox="0 0 21 22"><path d="M0 2 H21 M0 11 H21 M0 20 H21" stroke="#fff" stroke-width="1.6"/></svg>
<div class="b" style="left:2465px;top:332px;width:431px;height:48px;border:2px solid rgba(255,255,255,.75);border-radius:7px;box-sizing:border-box;"></div>
<div class="t " style="left:2482px;top:344.1px;font-size:23.7px;line-height:23.7px;color:#fff;font-weight:400;">vars(<b>price</b>, <b>weekly_price</b>, <b>monthly…</b></div>
<svg class="b" style="left:2560.4px;top:457.3px" width="20.8" height="20.8" viewBox="0 0 20.8 20.8"><path d="M10.4 0 V20.8 M0 10.4 H20.8" stroke="#333" stroke-width="2.5" fill="none"/></svg>
<div class="t " style="left:2601px;top:454.1px;font-size:28.3px;line-height:28.3px;color:#333;font-weight:400;">Add a new step</div>
<svg class="b" style="left:0;top:1792px" width="10" height="10"><path d="M0 0 A10 10 0 0 0 10 10 H0 Z" fill="#c2bebf"/><path d="M0 0 A10 10 0 0 0 10 10" fill="none" stroke="#8f8f8f" stroke-width="1"/></svg>
<svg class="b" style="left:2906px;top:1792px" width="10" height="10"><path d="M10 0 A10 10 0 0 1 0 10 H10 Z" fill="#b4b4b4"/><path d="M10 0 A10 10 0 0 1 0 10" fill="none" stroke="#8f8f8f" stroke-width="1"/></svg>
</body></html>
